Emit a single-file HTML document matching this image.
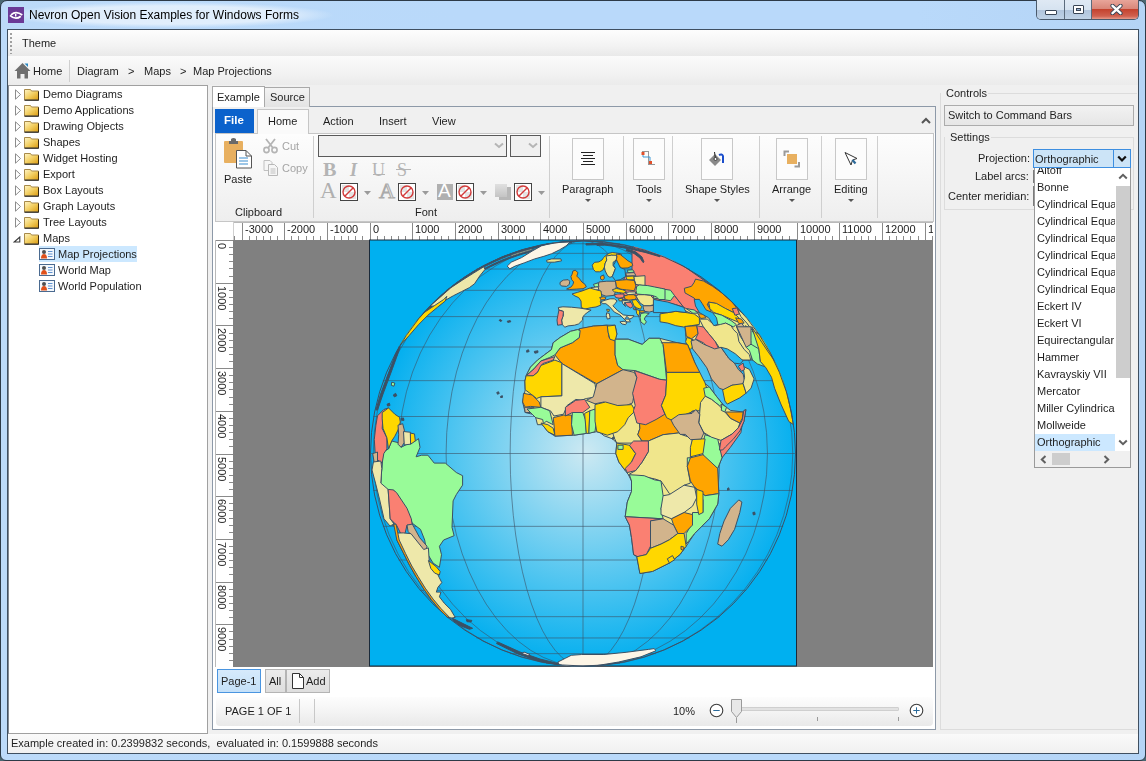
<!DOCTYPE html>
<html><head><meta charset="utf-8">
<style>
*{margin:0;padding:0;box-sizing:border-box}
html,body{width:1146px;height:761px;overflow:hidden;background:#4a6872}
body{position:relative;font-family:"Liberation Sans",sans-serif;font-size:11px;color:#1e1e1e}
.a{position:absolute}
.t{position:absolute;font-size:11px;line-height:13px;white-space:nowrap;color:#1e1e1e;will-change:transform}
#frame{left:0;top:0;width:1146px;height:761px;border:1px solid #2d3a47;border-radius:7px 7px 6px 6px;
 background:linear-gradient(90deg,#bcdaf9 0%,#b9d9fa 40%,#b9d9fa 80%,#b4d4f6 100%)}
#client{left:7px;top:29px;width:1132px;height:725px;border:1px solid #3f4f60;background:#f0f0f0}
</style></head>
<body>
<div id="frame" class="a"></div>
<!-- title glow -->
<div class="a" style="left:4px;top:2px;width:330px;height:26px;background:radial-gradient(closest-side,rgba(226,239,252,.95) 70%,rgba(226,239,252,0) 100%)"></div>
<!-- app icon -->
<div class="a" style="left:8px;top:7px;width:16px;height:16px;background:#6b3a96"></div>
<svg class="a" style="left:8px;top:7px" width="16" height="16" viewBox="0 0 16 16"><path d="M3 7.8 Q8 3.2 14.3 8" fill="none" stroke="#fff" stroke-width="1.6"/><path d="M2 8.3 Q7.5 13.5 12.8 9.2" fill="none" stroke="#fff" stroke-width="1.8"/><path d="M7.7 7 V9.6" stroke="#fff" stroke-width="1.4"/></svg>
<div class="t" style="left:29px;top:8px;font-size:12px;line-height:14px;color:#000">Nevron Open Vision Examples for Windows Forms</div>
<!-- caption buttons -->
<div class="a" style="left:1036px;top:0;width:103px;height:20px;border:1px solid #4a5a6c;border-top:none;border-radius:0 0 5px 5px;overflow:hidden">
  <div class="a" style="left:0;top:0;width:28px;height:19px;background:linear-gradient(#dfe9f4 0,#d6e3f0 50%,#b0c4dc 51%,#bfd2e6 100%);border-right:1px solid #5b6b7c"></div>
  <div class="a" style="left:28px;top:0;width:27px;height:19px;background:linear-gradient(#dfe9f4 0,#d6e3f0 50%,#b0c4dc 51%,#bfd2e6 100%);border-right:1px solid #5b6b7c"></div>
  <div class="a" style="left:55px;top:0;width:47px;height:19px;background:linear-gradient(#e8a59a 0,#d9877a 45%,#c4432f 50%,#d0614f 85%,#e79b8b 100%)"></div>
  <div class="a" style="left:8px;top:10px;width:12px;height:5px;border:1px solid #3a4656;background:#fff;border-radius:1px"></div>
  <div class="a" style="left:36px;top:5px;width:11px;height:9px;border:1px solid #3a4656;background:#fff;border-radius:1px"><div class="a" style="left:2px;top:2px;width:5px;height:3px;background:#9bb5d6;border:1px solid #3a4656"></div></div>
  <svg class="a" style="left:73px;top:4px" width="13" height="11" viewBox="0 0 13 11"><path d="M2.5 1.8 L10.5 9.2 M10.5 1.8 L2.5 9.2" stroke="#3a4656" stroke-width="4.2" stroke-linecap="round"/><path d="M2.5 1.8 L10.5 9.2 M10.5 1.8 L2.5 9.2" stroke="#fff" stroke-width="2.4" stroke-linecap="round"/></svg>
</div>

<div id="client" class="a"></div>
<!-- theme bar -->
<div class="a" style="left:8px;top:30px;width:1130px;height:26px;background:linear-gradient(#fdfdfd,#f3f3f3 60%,#e9e9e9)"></div>
<div class="a" style="left:10px;top:33px;width:2px;height:21px;background:repeating-linear-gradient(#a0a0a0 0 2px,transparent 2px 4px)"></div>
<div class="t" style="left:22px;top:37px">Theme</div>
<!-- breadcrumb -->
<div class="a" style="left:8px;top:56px;width:1130px;height:29px;background:linear-gradient(#fbfbfb,#f2f2f2 60%,#ebebeb)"></div>
<svg class="a" style="left:14px;top:62px" width="17" height="17" viewBox="0 0 17 17"><path d="M0.5 9 L8.5 1 L16.5 9 L14 9 L14 16.5 L10.5 16.5 L10.5 12 L6.5 12 L6.5 16.5 L3 16.5 L3 9Z" fill="#6f6f6f"/><path d="M10.5 1.5 L14 1.5 L14 5Z" fill="#2a87c0"/></svg>
<div class="t" style="left:33px;top:65px">Home</div>
<div class="a" style="left:69px;top:60px;width:1px;height:22px;background:#cfcfcf"></div>
<div class="t" style="left:77px;top:65px">Diagram</div>
<div class="t" style="left:128px;top:65px">&gt;</div>
<div class="t" style="left:144px;top:65px">Maps</div>
<div class="t" style="left:180px;top:65px">&gt;</div>
<div class="t" style="left:193px;top:65px">Map Projections</div>

<!-- tree panel -->
<div class="a" style="left:8px;top:85px;width:200px;height:649px;background:#fff;border:1px solid #a0a0a0;border-left-color:#828790"></div>
<svg class="a" style="left:14px;top:89px" width="8" height="11" viewBox="0 0 8 11"><path d="M1.5 0.8 L6.5 5.5 L1.5 10.2Z" fill="none" stroke="#8c8c8c" stroke-width="1"/></svg>
<svg class="a" style="left:24px;top:88px" width="16" height="13" viewBox="0 0 16 13"><defs><linearGradient id="fg0" x1="0" y1="0" x2="1" y2="1"><stop offset="0" stop-color="#fff6c8"/><stop offset=".5" stop-color="#f3cf62"/><stop offset="1" stop-color="#d99a10"/></linearGradient></defs><path d="M0.5 1.5 L6.5 1.5 L7.5 3 L14.5 3 L14.5 12 L0.5 12Z" fill="url(#fg0)" stroke="#a88a4a" stroke-width="1"/><path d="M0.5 12.2 L14.8 12.2" stroke="#2a2a2a" stroke-width="1.2"/><path d="M14.5 3.5 L14.5 12" stroke="#3a2a10" stroke-width="1"/></svg>
<div class="t" style="left:43px;top:88px">Demo Diagrams</div>
<svg class="a" style="left:14px;top:105px" width="8" height="11" viewBox="0 0 8 11"><path d="M1.5 0.8 L6.5 5.5 L1.5 10.2Z" fill="none" stroke="#8c8c8c" stroke-width="1"/></svg>
<svg class="a" style="left:24px;top:104px" width="16" height="13" viewBox="0 0 16 13"><defs><linearGradient id="fg1" x1="0" y1="0" x2="1" y2="1"><stop offset="0" stop-color="#fff6c8"/><stop offset=".5" stop-color="#f3cf62"/><stop offset="1" stop-color="#d99a10"/></linearGradient></defs><path d="M0.5 1.5 L6.5 1.5 L7.5 3 L14.5 3 L14.5 12 L0.5 12Z" fill="url(#fg1)" stroke="#a88a4a" stroke-width="1"/><path d="M0.5 12.2 L14.8 12.2" stroke="#2a2a2a" stroke-width="1.2"/><path d="M14.5 3.5 L14.5 12" stroke="#3a2a10" stroke-width="1"/></svg>
<div class="t" style="left:43px;top:104px">Demo Applications</div>
<svg class="a" style="left:14px;top:121px" width="8" height="11" viewBox="0 0 8 11"><path d="M1.5 0.8 L6.5 5.5 L1.5 10.2Z" fill="none" stroke="#8c8c8c" stroke-width="1"/></svg>
<svg class="a" style="left:24px;top:120px" width="16" height="13" viewBox="0 0 16 13"><defs><linearGradient id="fg2" x1="0" y1="0" x2="1" y2="1"><stop offset="0" stop-color="#fff6c8"/><stop offset=".5" stop-color="#f3cf62"/><stop offset="1" stop-color="#d99a10"/></linearGradient></defs><path d="M0.5 1.5 L6.5 1.5 L7.5 3 L14.5 3 L14.5 12 L0.5 12Z" fill="url(#fg2)" stroke="#a88a4a" stroke-width="1"/><path d="M0.5 12.2 L14.8 12.2" stroke="#2a2a2a" stroke-width="1.2"/><path d="M14.5 3.5 L14.5 12" stroke="#3a2a10" stroke-width="1"/></svg>
<div class="t" style="left:43px;top:120px">Drawing Objects</div>
<svg class="a" style="left:14px;top:137px" width="8" height="11" viewBox="0 0 8 11"><path d="M1.5 0.8 L6.5 5.5 L1.5 10.2Z" fill="none" stroke="#8c8c8c" stroke-width="1"/></svg>
<svg class="a" style="left:24px;top:136px" width="16" height="13" viewBox="0 0 16 13"><defs><linearGradient id="fg3" x1="0" y1="0" x2="1" y2="1"><stop offset="0" stop-color="#fff6c8"/><stop offset=".5" stop-color="#f3cf62"/><stop offset="1" stop-color="#d99a10"/></linearGradient></defs><path d="M0.5 1.5 L6.5 1.5 L7.5 3 L14.5 3 L14.5 12 L0.5 12Z" fill="url(#fg3)" stroke="#a88a4a" stroke-width="1"/><path d="M0.5 12.2 L14.8 12.2" stroke="#2a2a2a" stroke-width="1.2"/><path d="M14.5 3.5 L14.5 12" stroke="#3a2a10" stroke-width="1"/></svg>
<div class="t" style="left:43px;top:136px">Shapes</div>
<svg class="a" style="left:14px;top:153px" width="8" height="11" viewBox="0 0 8 11"><path d="M1.5 0.8 L6.5 5.5 L1.5 10.2Z" fill="none" stroke="#8c8c8c" stroke-width="1"/></svg>
<svg class="a" style="left:24px;top:152px" width="16" height="13" viewBox="0 0 16 13"><defs><linearGradient id="fg4" x1="0" y1="0" x2="1" y2="1"><stop offset="0" stop-color="#fff6c8"/><stop offset=".5" stop-color="#f3cf62"/><stop offset="1" stop-color="#d99a10"/></linearGradient></defs><path d="M0.5 1.5 L6.5 1.5 L7.5 3 L14.5 3 L14.5 12 L0.5 12Z" fill="url(#fg4)" stroke="#a88a4a" stroke-width="1"/><path d="M0.5 12.2 L14.8 12.2" stroke="#2a2a2a" stroke-width="1.2"/><path d="M14.5 3.5 L14.5 12" stroke="#3a2a10" stroke-width="1"/></svg>
<div class="t" style="left:43px;top:152px">Widget Hosting</div>
<svg class="a" style="left:14px;top:169px" width="8" height="11" viewBox="0 0 8 11"><path d="M1.5 0.8 L6.5 5.5 L1.5 10.2Z" fill="none" stroke="#8c8c8c" stroke-width="1"/></svg>
<svg class="a" style="left:24px;top:168px" width="16" height="13" viewBox="0 0 16 13"><defs><linearGradient id="fg5" x1="0" y1="0" x2="1" y2="1"><stop offset="0" stop-color="#fff6c8"/><stop offset=".5" stop-color="#f3cf62"/><stop offset="1" stop-color="#d99a10"/></linearGradient></defs><path d="M0.5 1.5 L6.5 1.5 L7.5 3 L14.5 3 L14.5 12 L0.5 12Z" fill="url(#fg5)" stroke="#a88a4a" stroke-width="1"/><path d="M0.5 12.2 L14.8 12.2" stroke="#2a2a2a" stroke-width="1.2"/><path d="M14.5 3.5 L14.5 12" stroke="#3a2a10" stroke-width="1"/></svg>
<div class="t" style="left:43px;top:168px">Export</div>
<svg class="a" style="left:14px;top:185px" width="8" height="11" viewBox="0 0 8 11"><path d="M1.5 0.8 L6.5 5.5 L1.5 10.2Z" fill="none" stroke="#8c8c8c" stroke-width="1"/></svg>
<svg class="a" style="left:24px;top:184px" width="16" height="13" viewBox="0 0 16 13"><defs><linearGradient id="fg6" x1="0" y1="0" x2="1" y2="1"><stop offset="0" stop-color="#fff6c8"/><stop offset=".5" stop-color="#f3cf62"/><stop offset="1" stop-color="#d99a10"/></linearGradient></defs><path d="M0.5 1.5 L6.5 1.5 L7.5 3 L14.5 3 L14.5 12 L0.5 12Z" fill="url(#fg6)" stroke="#a88a4a" stroke-width="1"/><path d="M0.5 12.2 L14.8 12.2" stroke="#2a2a2a" stroke-width="1.2"/><path d="M14.5 3.5 L14.5 12" stroke="#3a2a10" stroke-width="1"/></svg>
<div class="t" style="left:43px;top:184px">Box Layouts</div>
<svg class="a" style="left:14px;top:201px" width="8" height="11" viewBox="0 0 8 11"><path d="M1.5 0.8 L6.5 5.5 L1.5 10.2Z" fill="none" stroke="#8c8c8c" stroke-width="1"/></svg>
<svg class="a" style="left:24px;top:200px" width="16" height="13" viewBox="0 0 16 13"><defs><linearGradient id="fg7" x1="0" y1="0" x2="1" y2="1"><stop offset="0" stop-color="#fff6c8"/><stop offset=".5" stop-color="#f3cf62"/><stop offset="1" stop-color="#d99a10"/></linearGradient></defs><path d="M0.5 1.5 L6.5 1.5 L7.5 3 L14.5 3 L14.5 12 L0.5 12Z" fill="url(#fg7)" stroke="#a88a4a" stroke-width="1"/><path d="M0.5 12.2 L14.8 12.2" stroke="#2a2a2a" stroke-width="1.2"/><path d="M14.5 3.5 L14.5 12" stroke="#3a2a10" stroke-width="1"/></svg>
<div class="t" style="left:43px;top:200px">Graph Layouts</div>
<svg class="a" style="left:14px;top:217px" width="8" height="11" viewBox="0 0 8 11"><path d="M1.5 0.8 L6.5 5.5 L1.5 10.2Z" fill="none" stroke="#8c8c8c" stroke-width="1"/></svg>
<svg class="a" style="left:24px;top:216px" width="16" height="13" viewBox="0 0 16 13"><defs><linearGradient id="fg8" x1="0" y1="0" x2="1" y2="1"><stop offset="0" stop-color="#fff6c8"/><stop offset=".5" stop-color="#f3cf62"/><stop offset="1" stop-color="#d99a10"/></linearGradient></defs><path d="M0.5 1.5 L6.5 1.5 L7.5 3 L14.5 3 L14.5 12 L0.5 12Z" fill="url(#fg8)" stroke="#a88a4a" stroke-width="1"/><path d="M0.5 12.2 L14.8 12.2" stroke="#2a2a2a" stroke-width="1.2"/><path d="M14.5 3.5 L14.5 12" stroke="#3a2a10" stroke-width="1"/></svg>
<div class="t" style="left:43px;top:216px">Tree Layouts</div>
<svg class="a" style="left:13px;top:236px" width="8" height="7" viewBox="0 0 8 7"><path d="M6.8 1 L6.8 6 L1.2 6Z" fill="none" stroke="#3a3a3a" stroke-width="1.1" stroke-linejoin="miter"/></svg>
<svg class="a" style="left:24px;top:232px" width="16" height="13" viewBox="0 0 16 13"><defs><linearGradient id="fg9" x1="0" y1="0" x2="1" y2="1"><stop offset="0" stop-color="#fff6c8"/><stop offset=".5" stop-color="#f3cf62"/><stop offset="1" stop-color="#d99a10"/></linearGradient></defs><path d="M0.5 1.5 L6.5 1.5 L7.5 3 L14.5 3 L14.5 12 L0.5 12Z" fill="url(#fg9)" stroke="#a88a4a" stroke-width="1"/><path d="M0.5 12.2 L14.8 12.2" stroke="#2a2a2a" stroke-width="1.2"/><path d="M14.5 3.5 L14.5 12" stroke="#3a2a10" stroke-width="1"/></svg>
<div class="t" style="left:43px;top:232px">Maps</div>
<div class="a" style="left:39px;top:246px;width:98px;height:16px;background:#cce8ff"></div>
<svg class="a" style="left:39px;top:248px" width="16" height="12" viewBox="0 0 16 12"><rect x=".5" y=".5" width="15" height="11" fill="#f4f8fc" stroke="#4a6a90"/><circle cx="5" cy="4" r="2" fill="#505050"/><path d="M2 10.5 Q2 6 5 6 Q8 6 8 10.5Z" fill="#e0501a"/><path d="M9 3.5h4.5M9 6h4.5M9 8.5h4.5" stroke="#4f86cc" stroke-width=".9"/></svg>
<div class="t" style="left:58px;top:248px">Map Projections</div>
<svg class="a" style="left:39px;top:264px" width="16" height="12" viewBox="0 0 16 12"><rect x=".5" y=".5" width="15" height="11" fill="#f4f8fc" stroke="#4a6a90"/><circle cx="5" cy="4" r="2" fill="#505050"/><path d="M2 10.5 Q2 6 5 6 Q8 6 8 10.5Z" fill="#e0501a"/><path d="M9 3.5h4.5M9 6h4.5M9 8.5h4.5" stroke="#4f86cc" stroke-width=".9"/></svg>
<div class="t" style="left:58px;top:264px">World Map</div>
<svg class="a" style="left:39px;top:280px" width="16" height="12" viewBox="0 0 16 12"><rect x=".5" y=".5" width="15" height="11" fill="#f4f8fc" stroke="#4a6a90"/><circle cx="5" cy="4" r="2" fill="#505050"/><path d="M2 10.5 Q2 6 5 6 Q8 6 8 10.5Z" fill="#e0501a"/><path d="M9 3.5h4.5M9 6h4.5M9 8.5h4.5" stroke="#4f86cc" stroke-width=".9"/></svg>
<div class="t" style="left:58px;top:280px">World Population</div>

<!-- ===== center tab control ===== -->
<div class="a" style="left:212px;top:106px;width:724px;height:624px;background:#fff;border:1px solid #8d99a8"></div>
<div class="a" style="left:264px;top:87px;width:46px;height:20px;background:linear-gradient(#f3f3f3,#e3e3e3);border:1px solid #a9a9a9;border-bottom:none"></div>
<div class="a" style="left:212px;top:86px;width:53px;height:21px;background:#fff;border:1px solid #a9a9a9;border-bottom:none"></div>
<div class="t" style="left:217px;top:91px">Example</div>
<div class="t" style="left:270px;top:91px">Source</div>
<!-- ribbon tab strip -->
<div class="a" style="left:213px;top:107px;width:722px;height:26px;background:#f0f0f0"></div>
<div class="a" style="left:215px;top:109px;width:39px;height:24px;background:#0b62cc"></div>
<div class="t" style="left:224px;top:114px;color:#fff;font-weight:bold;font-size:11.5px;line-height:13px">File</div>
<div class="a" style="left:257px;top:109px;width:52px;height:25px;background:#fafafa;border:1px solid #c6c6c6;border-bottom:none;z-index:2"></div>
<div class="t" style="left:268px;top:115px;z-index:3">Home</div>
<div class="t" style="left:323px;top:115px">Action</div>
<div class="t" style="left:379px;top:115px">Insert</div>
<div class="t" style="left:432px;top:115px">View</div>
<svg class="a" style="left:921px;top:117px" width="10" height="8" viewBox="0 0 10 8"><path d="M1 6 L5 2 L9 6" fill="none" stroke="#555" stroke-width="2"/></svg>
<!-- ribbon body -->
<div class="a" style="left:215px;top:133px;width:719px;height:89px;background:linear-gradient(#fdfdfd,#f6f6f6 50%,#eeeeee);border:1px solid #c6c6c6"></div>
<div class="a" style="left:313px;top:136px;width:1px;height:82px;background:#cfcfcf"></div>
<div class="a" style="left:549px;top:136px;width:1px;height:82px;background:#cfcfcf"></div>
<div class="a" style="left:623px;top:136px;width:1px;height:82px;background:#cfcfcf"></div>
<div class="a" style="left:672px;top:136px;width:1px;height:82px;background:#cfcfcf"></div>
<div class="a" style="left:759px;top:136px;width:1px;height:82px;background:#cfcfcf"></div>
<div class="a" style="left:821px;top:136px;width:1px;height:82px;background:#cfcfcf"></div>
<div class="a" style="left:877px;top:136px;width:1px;height:82px;background:#cfcfcf"></div>
<!-- clipboard -->
<svg class="a" style="left:223px;top:137px" width="30" height="32" viewBox="0 0 30 32"><rect x="1" y="4" width="19" height="22" rx="1" fill="#e8b060"/><path d="M6 4 L8 4 L8 2 Q10.5 0 13 2 L13 4 L15 4 L15 7 L6 7Z" fill="#6a6a6a"/><path d="M13.5 13.5 L23 13.5 L28.5 19 L28.5 31 L13.5 31Z" fill="#fff" stroke="#555" stroke-width="1"/><path d="M23 13.5 L23 19 L28.5 19" fill="none" stroke="#555"/><path d="M16 21h9M16 24h9M16 27h9" stroke="#3a8ed0" stroke-width="1.2"/></svg>
<div class="t" style="left:224px;top:173px">Paste</div>
<div class="t" style="left:235px;top:206px">Clipboard</div>
<svg class="a" style="left:263px;top:138px" width="16" height="16" viewBox="0 0 16 16"><circle cx="3.5" cy="12" r="2.6" fill="none" stroke="#b4b4b4" stroke-width="1.6"/><circle cx="11.5" cy="12" r="2.6" fill="none" stroke="#b4b4b4" stroke-width="1.6"/><path d="M5 10 L12 1 M10 10 L3 1" stroke="#b4b4b4" stroke-width="1.8"/></svg>
<div class="t" style="left:282px;top:140px;color:#a5a5a5">Cut</div>
<svg class="a" style="left:263px;top:159px" width="16" height="17" viewBox="0 0 16 17"><path d="M1 1.5h6l2 2v8H1Z" fill="#f6f6f6" stroke="#c0c0c0"/><path d="M5.5 5.5h6l3 3v8h-9Z" fill="#f6f6f6" stroke="#b8b8b8"/><path d="M7.5 10h5M7.5 12h5M7.5 14h5" stroke="#c0c0c0"/></svg>
<div class="t" style="left:282px;top:162px;color:#a5a5a5">Copy</div>
<!-- font -->
<div class="a" style="left:318px;top:135px;width:189px;height:22px;border:1px solid #5a5a5a;background:#f0f0f0"></div>
<svg class="a" style="left:494px;top:142px" width="10" height="7" viewBox="0 0 10 7"><path d="M1 1.5 L5 5 L9 1.5" fill="none" stroke="#b5b5b5" stroke-width="2"/></svg>
<div class="a" style="left:510px;top:135px;width:31px;height:22px;border:1px solid #5a5a5a;background:#f0f0f0"></div>
<svg class="a" style="left:528px;top:142px" width="10" height="7" viewBox="0 0 10 7"><path d="M1 1.5 L5 5 L9 1.5" fill="none" stroke="#b5b5b5" stroke-width="2"/></svg>
<div class="a" style="left:323px;top:160px;font-family:'Liberation Serif';font-weight:bold;font-size:18px;transform:scaleX(1.12);transform-origin:0 0;line-height:20px;color:#b4b4b4">B</div>
<div class="a" style="left:350px;top:160px;font-family:'Liberation Serif';font-style:italic;font-weight:bold;font-size:18px;line-height:20px;color:#b4b4b4">I</div>
<div class="a" style="left:372px;top:160px;font-family:'Liberation Serif';font-size:18px;line-height:20px;color:#b4b4b4">U</div>
<div class="a" style="left:373px;top:174px;width:12px;height:1px;background:#b4b4b4"></div>
<div class="a" style="left:397px;top:160px;font-family:'Liberation Serif';font-size:18px;line-height:20px;color:#b4b4b4">S</div>
<div class="a" style="left:396px;top:169px;width:15px;height:1px;background:#b4b4b4"></div>
<div class="a" style="left:320px;top:179px;font-family:'Liberation Serif';font-size:23px;line-height:23px;color:#b0b0b0">A</div>
<svg class="a" style="left:340px;top:183px" width="18" height="18" viewBox="0 0 18 18"><rect x=".5" y=".5" width="17" height="17" fill="#fff" stroke="#444"/><rect x="2" y="2" width="7" height="7" fill="#e4e4e4"/><rect x="9" y="9" width="7" height="7" fill="#e4e4e4"/><circle cx="9" cy="9" r="6" fill="none" stroke="#d23a3a" stroke-width="1.4"/><path d="M13 5 L5 13" stroke="#d23a3a" stroke-width="1.4"/></svg>
<svg class="a" style="left:364px;top:191px" width="7" height="4" viewBox="0 0 7 4"><path d="M0 0 H7 L3.5 4Z" fill="#9a9a9a"/></svg>
<div class="a" style="left:379px;top:180px;font-family:'Liberation Serif';font-size:22px;line-height:22px;color:#e6e6e6;-webkit-text-stroke:1px #aaa">A</div>
<svg class="a" style="left:398px;top:183px" width="18" height="18" viewBox="0 0 18 18"><rect x=".5" y=".5" width="17" height="17" fill="#fff" stroke="#444"/><rect x="2" y="2" width="7" height="7" fill="#e4e4e4"/><rect x="9" y="9" width="7" height="7" fill="#e4e4e4"/><circle cx="9" cy="9" r="6" fill="none" stroke="#d23a3a" stroke-width="1.4"/><path d="M13 5 L5 13" stroke="#d23a3a" stroke-width="1.4"/></svg>
<svg class="a" style="left:422px;top:191px" width="7" height="4" viewBox="0 0 7 4"><path d="M0 0 H7 L3.5 4Z" fill="#9a9a9a"/></svg>
<div class="a" style="left:437px;top:184px;width:16px;height:16px;background:#b0b0b0"></div><div class="a" style="left:438px;top:181px;font-family:'Liberation Sans';font-size:19px;line-height:20px;color:#fff">A</div>
<svg class="a" style="left:456px;top:183px" width="18" height="18" viewBox="0 0 18 18"><rect x=".5" y=".5" width="17" height="17" fill="#fff" stroke="#444"/><rect x="2" y="2" width="7" height="7" fill="#e4e4e4"/><rect x="9" y="9" width="7" height="7" fill="#e4e4e4"/><circle cx="9" cy="9" r="6" fill="none" stroke="#d23a3a" stroke-width="1.4"/><path d="M13 5 L5 13" stroke="#d23a3a" stroke-width="1.4"/></svg>
<svg class="a" style="left:480px;top:191px" width="7" height="4" viewBox="0 0 7 4"><path d="M0 0 H7 L3.5 4Z" fill="#9a9a9a"/></svg>
<div class="a" style="left:499px;top:187px;width:12px;height:13px;background:#b8b8b8"></div><div class="a" style="left:495px;top:184px;width:12px;height:13px;background:linear-gradient(#e0e0e0,#c4c4c4)"></div>
<svg class="a" style="left:514px;top:183px" width="18" height="18" viewBox="0 0 18 18"><rect x=".5" y=".5" width="17" height="17" fill="#fff" stroke="#444"/><rect x="2" y="2" width="7" height="7" fill="#e4e4e4"/><rect x="9" y="9" width="7" height="7" fill="#e4e4e4"/><circle cx="9" cy="9" r="6" fill="none" stroke="#d23a3a" stroke-width="1.4"/><path d="M13 5 L5 13" stroke="#d23a3a" stroke-width="1.4"/></svg>
<svg class="a" style="left:538px;top:191px" width="7" height="4" viewBox="0 0 7 4"><path d="M0 0 H7 L3.5 4Z" fill="#9a9a9a"/></svg>
<div class="t" style="left:415px;top:206px">Font</div>
<!-- big buttons -->
<div class="a" style="left:572px;top:138px;width:32px;height:42px;border:1px solid #c8c8c8;background:#fcfcfc"></div>
<svg class="a" style="left:580px;top:151px" width="16" height="15" viewBox="0 0 16 15"><path d="M1 1.5h14M3 4.5h10M1 7.5h14M3 10.5h10M1 13.5h14" stroke="#222" stroke-width="1"/></svg>
<div class="t" style="left:562px;top:183px">Paragraph</div>
<div class="a" style="left:633px;top:138px;width:32px;height:42px;border:1px solid #c8c8c8;background:#fcfcfc"></div>
<svg class="a" style="left:640px;top:150px" width="18" height="18" viewBox="0 0 18 18"><path d="M2.5 1.5h6v13h6" fill="none" stroke="#333" stroke-width="1" stroke-dasharray="1 1"/><path d="M3 4 V7 H10 V12" fill="none" stroke="#3f9ad6" stroke-width="1"/><rect x="1.5" y="2" width="3" height="3" fill="#e2502a"/><rect x="9" y="11" width="3" height="3" fill="#e2502a"/></svg>
<div class="t" style="left:636px;top:183px">Tools</div>
<div class="a" style="left:701px;top:138px;width:32px;height:42px;border:1px solid #c8c8c8;background:#fcfcfc"></div>
<svg class="a" style="left:708px;top:150px" width="18" height="18" viewBox="0 0 18 18"><path d="M1 10 L7 4 L13 10 L7 16Z" fill="#8a8a8a"/><path d="M6.5 2 L7.5 9" stroke="#222" stroke-width="1"/><circle cx="7.5" cy="9" r="1.5" fill="#fff" stroke="#222" stroke-width=".8"/><path d="M11 5 Q14 3.5 15 6 L15 13" fill="none" stroke="#1c4fcc" stroke-width="2"/></svg>
<div class="t" style="left:685px;top:183px">Shape Styles</div>
<div class="a" style="left:776px;top:138px;width:32px;height:42px;border:1px solid #c8c8c8;background:#fcfcfc"></div>
<svg class="a" style="left:783px;top:150px" width="18" height="18" viewBox="0 0 18 18"><path d="M1.5 6V1.5H6" fill="none" stroke="#9a9a9a" stroke-width="2"/><path d="M16 12v4.5h-4.5" fill="none" stroke="#9a9a9a" stroke-width="2"/><rect x="4" y="4" width="10" height="10" fill="#e8b060"/></svg>
<div class="t" style="left:772px;top:183px">Arrange</div>
<div class="a" style="left:835px;top:138px;width:32px;height:42px;border:1px solid #c8c8c8;background:#fcfcfc"></div>
<svg class="a" style="left:843px;top:151px" width="16" height="16" viewBox="0 0 16 16"><path d="M2 1.5 L14 7.5 L9.5 9 L8 14Z" fill="#fff" stroke="#333" stroke-width="1" stroke-linejoin="round"/><path d="M9.5 9 L12.5 12.5" stroke="#2d6a9a" stroke-width="2.2"/></svg>
<div class="t" style="left:834px;top:183px">Editing</div>
<svg class="a" style="left:585px;top:199px" width="6" height="3" viewBox="0 0 6 3"><path d="M0 0 H6 L3 3Z" fill="#555"/></svg>
<svg class="a" style="left:646px;top:199px" width="6" height="3" viewBox="0 0 6 3"><path d="M0 0 H6 L3 3Z" fill="#555"/></svg>
<svg class="a" style="left:714px;top:199px" width="6" height="3" viewBox="0 0 6 3"><path d="M0 0 H6 L3 3Z" fill="#555"/></svg>
<svg class="a" style="left:789px;top:199px" width="6" height="3" viewBox="0 0 6 3"><path d="M0 0 H6 L3 3Z" fill="#555"/></svg>
<svg class="a" style="left:848px;top:199px" width="6" height="3" viewBox="0 0 6 3"><path d="M0 0 H6 L3 3Z" fill="#555"/></svg>
<div class="a" style="left:215px;top:222px;width:719px;height:19px;background:#fff"></div><div class="a" style="left:0;top:0;width:933px;height:761px;overflow:hidden">
<div class="a" style="left:233px;top:222px;width:700px;height:1px;background:#b9b9b9"></div>
<div class="a" style="left:233px;top:222px;width:1px;height:18px;background:#d0d0d0"></div>
<div class="a" style="left:215px;top:240px;width:18px;height:427px;background:#fff;border-top:1px solid #b9b9b9;border-left:1px solid #b9b9b9"></div>
<div class="t" style="left:245px;top:223px;color:#222">-3000</div>
<div class="t" style="left:287px;top:223px;color:#222">-2000</div>
<div class="t" style="left:330px;top:223px;color:#222">-1000</div>
<div class="t" style="left:373px;top:223px;color:#222">0</div>
<div class="t" style="left:415px;top:223px;color:#222">1000</div>
<div class="t" style="left:458px;top:223px;color:#222">2000</div>
<div class="t" style="left:501px;top:223px;color:#222">3000</div>
<div class="t" style="left:543px;top:223px;color:#222">4000</div>
<div class="t" style="left:586px;top:223px;color:#222">5000</div>
<div class="t" style="left:629px;top:223px;color:#222">6000</div>
<div class="t" style="left:671px;top:223px;color:#222">7000</div>
<div class="t" style="left:714px;top:223px;color:#222">8000</div>
<div class="t" style="left:757px;top:223px;color:#222">9000</div>
<div class="t" style="left:800px;top:223px;color:#222">10000</div>
<div class="t" style="left:842px;top:223px;color:#222">11000</div>
<div class="t" style="left:885px;top:223px;color:#222">12000</div>
<div class="t" style="left:928px;top:223px;color:#222">13000</div>
<div class="a" style="left:234px;top:236px;width:1px;height:4px;background:#8a8a8a"></div>
<div class="a" style="left:242px;top:223px;width:1px;height:17px;background:#8a8a8a"></div>
<div class="a" style="left:249px;top:236px;width:1px;height:4px;background:#8a8a8a"></div>
<div class="a" style="left:256px;top:236px;width:1px;height:4px;background:#8a8a8a"></div>
<div class="a" style="left:263px;top:236px;width:1px;height:4px;background:#8a8a8a"></div>
<div class="a" style="left:270px;top:236px;width:1px;height:4px;background:#8a8a8a"></div>
<div class="a" style="left:277px;top:236px;width:1px;height:4px;background:#8a8a8a"></div>
<div class="a" style="left:284px;top:223px;width:1px;height:17px;background:#8a8a8a"></div>
<div class="a" style="left:291px;top:236px;width:1px;height:4px;background:#8a8a8a"></div>
<div class="a" style="left:298px;top:236px;width:1px;height:4px;background:#8a8a8a"></div>
<div class="a" style="left:306px;top:236px;width:1px;height:4px;background:#8a8a8a"></div>
<div class="a" style="left:313px;top:236px;width:1px;height:4px;background:#8a8a8a"></div>
<div class="a" style="left:320px;top:236px;width:1px;height:4px;background:#8a8a8a"></div>
<div class="a" style="left:327px;top:223px;width:1px;height:17px;background:#8a8a8a"></div>
<div class="a" style="left:334px;top:236px;width:1px;height:4px;background:#8a8a8a"></div>
<div class="a" style="left:341px;top:236px;width:1px;height:4px;background:#8a8a8a"></div>
<div class="a" style="left:348px;top:236px;width:1px;height:4px;background:#8a8a8a"></div>
<div class="a" style="left:355px;top:236px;width:1px;height:4px;background:#8a8a8a"></div>
<div class="a" style="left:362px;top:236px;width:1px;height:4px;background:#8a8a8a"></div>
<div class="a" style="left:370px;top:223px;width:1px;height:17px;background:#8a8a8a"></div>
<div class="a" style="left:377px;top:236px;width:1px;height:4px;background:#8a8a8a"></div>
<div class="a" style="left:384px;top:236px;width:1px;height:4px;background:#8a8a8a"></div>
<div class="a" style="left:391px;top:236px;width:1px;height:4px;background:#8a8a8a"></div>
<div class="a" style="left:398px;top:236px;width:1px;height:4px;background:#8a8a8a"></div>
<div class="a" style="left:405px;top:236px;width:1px;height:4px;background:#8a8a8a"></div>
<div class="a" style="left:412px;top:223px;width:1px;height:17px;background:#8a8a8a"></div>
<div class="a" style="left:419px;top:236px;width:1px;height:4px;background:#8a8a8a"></div>
<div class="a" style="left:427px;top:236px;width:1px;height:4px;background:#8a8a8a"></div>
<div class="a" style="left:434px;top:236px;width:1px;height:4px;background:#8a8a8a"></div>
<div class="a" style="left:441px;top:236px;width:1px;height:4px;background:#8a8a8a"></div>
<div class="a" style="left:448px;top:236px;width:1px;height:4px;background:#8a8a8a"></div>
<div class="a" style="left:455px;top:223px;width:1px;height:17px;background:#8a8a8a"></div>
<div class="a" style="left:462px;top:236px;width:1px;height:4px;background:#8a8a8a"></div>
<div class="a" style="left:469px;top:236px;width:1px;height:4px;background:#8a8a8a"></div>
<div class="a" style="left:476px;top:236px;width:1px;height:4px;background:#8a8a8a"></div>
<div class="a" style="left:483px;top:236px;width:1px;height:4px;background:#8a8a8a"></div>
<div class="a" style="left:491px;top:236px;width:1px;height:4px;background:#8a8a8a"></div>
<div class="a" style="left:498px;top:223px;width:1px;height:17px;background:#8a8a8a"></div>
<div class="a" style="left:505px;top:236px;width:1px;height:4px;background:#8a8a8a"></div>
<div class="a" style="left:512px;top:236px;width:1px;height:4px;background:#8a8a8a"></div>
<div class="a" style="left:519px;top:236px;width:1px;height:4px;background:#8a8a8a"></div>
<div class="a" style="left:526px;top:236px;width:1px;height:4px;background:#8a8a8a"></div>
<div class="a" style="left:533px;top:236px;width:1px;height:4px;background:#8a8a8a"></div>
<div class="a" style="left:540px;top:223px;width:1px;height:17px;background:#8a8a8a"></div>
<div class="a" style="left:548px;top:236px;width:1px;height:4px;background:#8a8a8a"></div>
<div class="a" style="left:555px;top:236px;width:1px;height:4px;background:#8a8a8a"></div>
<div class="a" style="left:562px;top:236px;width:1px;height:4px;background:#8a8a8a"></div>
<div class="a" style="left:569px;top:236px;width:1px;height:4px;background:#8a8a8a"></div>
<div class="a" style="left:576px;top:236px;width:1px;height:4px;background:#8a8a8a"></div>
<div class="a" style="left:583px;top:223px;width:1px;height:17px;background:#8a8a8a"></div>
<div class="a" style="left:590px;top:236px;width:1px;height:4px;background:#8a8a8a"></div>
<div class="a" style="left:597px;top:236px;width:1px;height:4px;background:#8a8a8a"></div>
<div class="a" style="left:604px;top:236px;width:1px;height:4px;background:#8a8a8a"></div>
<div class="a" style="left:612px;top:236px;width:1px;height:4px;background:#8a8a8a"></div>
<div class="a" style="left:619px;top:236px;width:1px;height:4px;background:#8a8a8a"></div>
<div class="a" style="left:626px;top:223px;width:1px;height:17px;background:#8a8a8a"></div>
<div class="a" style="left:633px;top:236px;width:1px;height:4px;background:#8a8a8a"></div>
<div class="a" style="left:640px;top:236px;width:1px;height:4px;background:#8a8a8a"></div>
<div class="a" style="left:647px;top:236px;width:1px;height:4px;background:#8a8a8a"></div>
<div class="a" style="left:654px;top:236px;width:1px;height:4px;background:#8a8a8a"></div>
<div class="a" style="left:661px;top:236px;width:1px;height:4px;background:#8a8a8a"></div>
<div class="a" style="left:668px;top:223px;width:1px;height:17px;background:#8a8a8a"></div>
<div class="a" style="left:676px;top:236px;width:1px;height:4px;background:#8a8a8a"></div>
<div class="a" style="left:683px;top:236px;width:1px;height:4px;background:#8a8a8a"></div>
<div class="a" style="left:690px;top:236px;width:1px;height:4px;background:#8a8a8a"></div>
<div class="a" style="left:697px;top:236px;width:1px;height:4px;background:#8a8a8a"></div>
<div class="a" style="left:704px;top:236px;width:1px;height:4px;background:#8a8a8a"></div>
<div class="a" style="left:711px;top:223px;width:1px;height:17px;background:#8a8a8a"></div>
<div class="a" style="left:718px;top:236px;width:1px;height:4px;background:#8a8a8a"></div>
<div class="a" style="left:725px;top:236px;width:1px;height:4px;background:#8a8a8a"></div>
<div class="a" style="left:733px;top:236px;width:1px;height:4px;background:#8a8a8a"></div>
<div class="a" style="left:740px;top:236px;width:1px;height:4px;background:#8a8a8a"></div>
<div class="a" style="left:747px;top:236px;width:1px;height:4px;background:#8a8a8a"></div>
<div class="a" style="left:754px;top:223px;width:1px;height:17px;background:#8a8a8a"></div>
<div class="a" style="left:761px;top:236px;width:1px;height:4px;background:#8a8a8a"></div>
<div class="a" style="left:768px;top:236px;width:1px;height:4px;background:#8a8a8a"></div>
<div class="a" style="left:775px;top:236px;width:1px;height:4px;background:#8a8a8a"></div>
<div class="a" style="left:782px;top:236px;width:1px;height:4px;background:#8a8a8a"></div>
<div class="a" style="left:789px;top:236px;width:1px;height:4px;background:#8a8a8a"></div>
<div class="a" style="left:797px;top:223px;width:1px;height:17px;background:#8a8a8a"></div>
<div class="a" style="left:804px;top:236px;width:1px;height:4px;background:#8a8a8a"></div>
<div class="a" style="left:811px;top:236px;width:1px;height:4px;background:#8a8a8a"></div>
<div class="a" style="left:818px;top:236px;width:1px;height:4px;background:#8a8a8a"></div>
<div class="a" style="left:825px;top:236px;width:1px;height:4px;background:#8a8a8a"></div>
<div class="a" style="left:832px;top:236px;width:1px;height:4px;background:#8a8a8a"></div>
<div class="a" style="left:839px;top:223px;width:1px;height:17px;background:#8a8a8a"></div>
<div class="a" style="left:846px;top:236px;width:1px;height:4px;background:#8a8a8a"></div>
<div class="a" style="left:854px;top:236px;width:1px;height:4px;background:#8a8a8a"></div>
<div class="a" style="left:861px;top:236px;width:1px;height:4px;background:#8a8a8a"></div>
<div class="a" style="left:868px;top:236px;width:1px;height:4px;background:#8a8a8a"></div>
<div class="a" style="left:875px;top:236px;width:1px;height:4px;background:#8a8a8a"></div>
<div class="a" style="left:882px;top:223px;width:1px;height:17px;background:#8a8a8a"></div>
<div class="a" style="left:889px;top:236px;width:1px;height:4px;background:#8a8a8a"></div>
<div class="a" style="left:896px;top:236px;width:1px;height:4px;background:#8a8a8a"></div>
<div class="a" style="left:903px;top:236px;width:1px;height:4px;background:#8a8a8a"></div>
<div class="a" style="left:910px;top:236px;width:1px;height:4px;background:#8a8a8a"></div>
<div class="a" style="left:918px;top:236px;width:1px;height:4px;background:#8a8a8a"></div>
<div class="a" style="left:925px;top:223px;width:1px;height:17px;background:#8a8a8a"></div>
<div class="a" style="left:932px;top:236px;width:1px;height:4px;background:#8a8a8a"></div>
</div>
<div class="a" style="left:216px;top:240px;width:17px;height:1px;background:#8a8a8a"></div>
<div class="t" style="left:228px;top:243px;color:#222;transform-origin:0 0;transform:rotate(90deg)">0</div>
<div class="a" style="left:229px;top:247px;width:4px;height:1px;background:#8a8a8a"></div>
<div class="a" style="left:229px;top:254px;width:4px;height:1px;background:#8a8a8a"></div>
<div class="a" style="left:229px;top:261px;width:4px;height:1px;background:#8a8a8a"></div>
<div class="a" style="left:229px;top:268px;width:4px;height:1px;background:#8a8a8a"></div>
<div class="a" style="left:229px;top:276px;width:4px;height:1px;background:#8a8a8a"></div>
<div class="a" style="left:216px;top:283px;width:17px;height:1px;background:#8a8a8a"></div>
<div class="t" style="left:228px;top:286px;color:#222;transform-origin:0 0;transform:rotate(90deg)">1000</div>
<div class="a" style="left:229px;top:290px;width:4px;height:1px;background:#8a8a8a"></div>
<div class="a" style="left:229px;top:297px;width:4px;height:1px;background:#8a8a8a"></div>
<div class="a" style="left:229px;top:304px;width:4px;height:1px;background:#8a8a8a"></div>
<div class="a" style="left:229px;top:311px;width:4px;height:1px;background:#8a8a8a"></div>
<div class="a" style="left:229px;top:318px;width:4px;height:1px;background:#8a8a8a"></div>
<div class="a" style="left:216px;top:325px;width:17px;height:1px;background:#8a8a8a"></div>
<div class="t" style="left:228px;top:328px;color:#222;transform-origin:0 0;transform:rotate(90deg)">2000</div>
<div class="a" style="left:229px;top:333px;width:4px;height:1px;background:#8a8a8a"></div>
<div class="a" style="left:229px;top:340px;width:4px;height:1px;background:#8a8a8a"></div>
<div class="a" style="left:229px;top:347px;width:4px;height:1px;background:#8a8a8a"></div>
<div class="a" style="left:229px;top:354px;width:4px;height:1px;background:#8a8a8a"></div>
<div class="a" style="left:229px;top:361px;width:4px;height:1px;background:#8a8a8a"></div>
<div class="a" style="left:216px;top:368px;width:17px;height:1px;background:#8a8a8a"></div>
<div class="t" style="left:228px;top:371px;color:#222;transform-origin:0 0;transform:rotate(90deg)">3000</div>
<div class="a" style="left:229px;top:375px;width:4px;height:1px;background:#8a8a8a"></div>
<div class="a" style="left:229px;top:382px;width:4px;height:1px;background:#8a8a8a"></div>
<div class="a" style="left:229px;top:389px;width:4px;height:1px;background:#8a8a8a"></div>
<div class="a" style="left:229px;top:397px;width:4px;height:1px;background:#8a8a8a"></div>
<div class="a" style="left:229px;top:404px;width:4px;height:1px;background:#8a8a8a"></div>
<div class="a" style="left:216px;top:411px;width:17px;height:1px;background:#8a8a8a"></div>
<div class="t" style="left:228px;top:414px;color:#222;transform-origin:0 0;transform:rotate(90deg)">4000</div>
<div class="a" style="left:229px;top:418px;width:4px;height:1px;background:#8a8a8a"></div>
<div class="a" style="left:229px;top:425px;width:4px;height:1px;background:#8a8a8a"></div>
<div class="a" style="left:229px;top:432px;width:4px;height:1px;background:#8a8a8a"></div>
<div class="a" style="left:229px;top:439px;width:4px;height:1px;background:#8a8a8a"></div>
<div class="a" style="left:229px;top:446px;width:4px;height:1px;background:#8a8a8a"></div>
<div class="a" style="left:216px;top:454px;width:17px;height:1px;background:#8a8a8a"></div>
<div class="t" style="left:228px;top:457px;color:#222;transform-origin:0 0;transform:rotate(90deg)">5000</div>
<div class="a" style="left:229px;top:461px;width:4px;height:1px;background:#8a8a8a"></div>
<div class="a" style="left:229px;top:468px;width:4px;height:1px;background:#8a8a8a"></div>
<div class="a" style="left:229px;top:475px;width:4px;height:1px;background:#8a8a8a"></div>
<div class="a" style="left:229px;top:482px;width:4px;height:1px;background:#8a8a8a"></div>
<div class="a" style="left:229px;top:489px;width:4px;height:1px;background:#8a8a8a"></div>
<div class="a" style="left:216px;top:496px;width:17px;height:1px;background:#8a8a8a"></div>
<div class="t" style="left:228px;top:499px;color:#222;transform-origin:0 0;transform:rotate(90deg)">6000</div>
<div class="a" style="left:229px;top:503px;width:4px;height:1px;background:#8a8a8a"></div>
<div class="a" style="left:229px;top:510px;width:4px;height:1px;background:#8a8a8a"></div>
<div class="a" style="left:229px;top:518px;width:4px;height:1px;background:#8a8a8a"></div>
<div class="a" style="left:229px;top:525px;width:4px;height:1px;background:#8a8a8a"></div>
<div class="a" style="left:229px;top:532px;width:4px;height:1px;background:#8a8a8a"></div>
<div class="a" style="left:216px;top:539px;width:17px;height:1px;background:#8a8a8a"></div>
<div class="t" style="left:228px;top:542px;color:#222;transform-origin:0 0;transform:rotate(90deg)">7000</div>
<div class="a" style="left:229px;top:546px;width:4px;height:1px;background:#8a8a8a"></div>
<div class="a" style="left:229px;top:553px;width:4px;height:1px;background:#8a8a8a"></div>
<div class="a" style="left:229px;top:560px;width:4px;height:1px;background:#8a8a8a"></div>
<div class="a" style="left:229px;top:567px;width:4px;height:1px;background:#8a8a8a"></div>
<div class="a" style="left:229px;top:574px;width:4px;height:1px;background:#8a8a8a"></div>
<div class="a" style="left:216px;top:582px;width:17px;height:1px;background:#8a8a8a"></div>
<div class="t" style="left:228px;top:585px;color:#222;transform-origin:0 0;transform:rotate(90deg)">8000</div>
<div class="a" style="left:229px;top:589px;width:4px;height:1px;background:#8a8a8a"></div>
<div class="a" style="left:229px;top:596px;width:4px;height:1px;background:#8a8a8a"></div>
<div class="a" style="left:229px;top:603px;width:4px;height:1px;background:#8a8a8a"></div>
<div class="a" style="left:229px;top:610px;width:4px;height:1px;background:#8a8a8a"></div>
<div class="a" style="left:229px;top:617px;width:4px;height:1px;background:#8a8a8a"></div>
<div class="a" style="left:216px;top:624px;width:17px;height:1px;background:#8a8a8a"></div>
<div class="t" style="left:228px;top:627px;color:#222;transform-origin:0 0;transform:rotate(90deg)">9000</div>
<div class="a" style="left:229px;top:631px;width:4px;height:1px;background:#8a8a8a"></div>
<div class="a" style="left:229px;top:639px;width:4px;height:1px;background:#8a8a8a"></div>
<div class="a" style="left:229px;top:646px;width:4px;height:1px;background:#8a8a8a"></div>
<div class="a" style="left:229px;top:653px;width:4px;height:1px;background:#8a8a8a"></div>
<div class="a" style="left:229px;top:660px;width:4px;height:1px;background:#8a8a8a"></div>
<div class="a" style="left:233px;top:240px;width:700px;height:427px;background:#808080"></div>
<svg class="a" style="left:0;top:0" width="1146" height="761" viewBox="0 0 1146 761"><defs><radialGradient id="oc" gradientUnits="userSpaceOnUse" cx="586" cy="452" r="216" fx="586" fy="452"><stop offset="0" stop-color="#cde9f2"/><stop offset="1" stop-color="#00aeef"/></radialGradient><clipPath id="gc"><circle cx="583" cy="453.5" r="213"/></clipPath></defs><rect x="369.5" y="240" width="427" height="426" fill="#00b0f0" stroke="#1a2a3a" stroke-width="1"/><circle cx="583" cy="453.5" r="213" fill="url(#oc)"/><path d="M546.01 663.26H619.99 M510.15 653.65H655.85 M476.50 637.96H689.50 M446.09 616.67H719.91 M419.83 590.41H746.17 M398.54 560.00H767.46 M382.85 526.35H783.15 M373.24 490.49H792.76 M370.00 453.50H796.00 M373.24 416.51H792.76 M382.85 380.65H783.15 M398.54 347.00H767.46 M419.83 316.59H746.17 M446.09 290.33H719.91 M476.50 269.04H689.50 M510.15 253.35H655.85 M546.01 243.74H619.99 M583.00 240.50A209.76 213.00 0 0 0 583.00 666.50 M583.00 240.50A184.46 213.00 0 0 0 583.00 666.50 M583.00 240.50A136.91 213.00 0 0 0 583.00 666.50 M583.00 240.50A72.85 213.00 0 0 0 583.00 666.50 M583.00 240.50V666.50 M583.00 240.50A72.85 213.00 0 0 1 583.00 666.50 M583.00 240.50A136.91 213.00 0 0 1 583.00 666.50 M583.00 240.50A184.46 213.00 0 0 1 583.00 666.50 M583.00 240.50A209.76 213.00 0 0 1 583.00 666.50" fill="none" stroke="#3c5064" stroke-width=".8" opacity=".75"/><g clip-path="url(#gc)" stroke="#3c5064" stroke-width="1" stroke-linejoin="round"><polygon points="683.7,286.3 738.9,308.6 752.0,331.0 754.6,360.0 738.9,360.0 731.0,354.6 719.1,349.4 711.3,350.7 691.5,338.9 686.3,341.5 685.0,326.4 696.8,325.7 699.4,317.8 683.7,309.9" fill="#f0e68c"/><polygon points="620.6,286.3 674.5,295.5 683.7,307.3 675.8,304.7 653.4,299.4 620.6,299.4" fill="#fa8072"/><polygon points="632.0,248.0 645.0,233.7 673.1,220.6 673.1,260.0 686.3,267.9 699.4,277.1 712.6,286.3 723.1,294.2 733.6,303.4 738.9,308.6 736.2,312.6 707.3,304.7 699.4,312.6 686.3,308.6 683.7,307.3 674.5,295.5 620.0,295.5 625.0,275.0 632.0,270.0" fill="#fa8072"/><polygon points="695.5,279.1 703.4,281.0 712.6,286.3 721.8,292.9 731.0,300.7 736.2,307.3 733.6,312.6 728.3,309.9 721.8,307.3 715.2,303.4 708.6,302.1 707.3,304.7 711.3,311.3 706.0,312.6 703.4,307.3 698.1,303.4 694.2,298.1 685.0,292.9 684.3,288.3 691.5,286.3 694.2,282.3" fill="#ffa500"/><polygon points="708.6,302.1 716.5,303.4 725.7,308.6 733.6,312.6 738.9,317.8 737.5,321.8 731.0,319.1 721.8,315.2 713.9,312.6 709.9,308.6" fill="#ffd700"/><polygon points="712.6,312.6 721.8,315.2 731.0,320.5 736.2,324.4 733.6,327.0 725.7,323.1 719.1,325.7 715.2,320.5" fill="#98fb98"/><polygon points="732.3,308.6 737.5,308.0 739.5,313.9 734.9,315.2" fill="#fa8072"/><polygon points="735.6,317.8 741.5,319.1 744.1,323.1 738.9,323.7" fill="#ffa500"/><polygon points="737.5,309.3 745.4,315.2 752.0,323.1 758.6,332.3 765.2,341.5 771.1,352.0 769.8,356.0 762.5,344.1 754.6,333.6 746.8,323.1 740.8,316.5" fill="#f0e68c"/><polygon points="699.4,319.1 707.3,319.1 715.2,325.7 720.5,324.4 725.7,323.1 731.0,325.7 733.6,329.7 737.5,333.6 738.9,341.5 744.1,349.4 749.4,354.6 750.7,360.0 738.9,360.0 731.0,354.6 720.5,349.4 715.2,341.5 708.6,333.6 703.4,327.0" fill="#f0e68c"/><polygon points="736.2,325.7 741.5,323.1 745.4,328.3 750.7,338.9 750.7,346.8 745.4,344.1 740.2,336.2" fill="#d2b48c"/><polygon points="745.4,325.7 752.0,329.7 758.6,338.9 761.2,349.4 762.5,360.0 752.0,360.0 750.7,352.0 750.7,341.5" fill="#98fb98"/><polygon points="752.0,331.0 758.6,333.6 765.2,341.5 771.7,354.6 774.4,360.0 763.8,360.0 761.2,349.4 758.6,338.9" fill="#ffd700"/><polygon points="660.0,313.9 667.9,312.6 675.8,311.3 686.3,312.6 694.2,313.9 699.4,317.8 699.4,324.4 691.5,325.7 683.7,327.0 675.8,325.7 667.9,323.1 660.0,321.8" fill="#ffd700"/><polygon points="686.3,308.6 694.2,309.9 698.1,313.2 692.9,313.2" fill="#98fb98"/><polygon points="698.1,313.9 703.4,313.9 706.0,317.8 700.7,318.5" fill="#ffa500"/><polygon points="685.0,326.4 696.8,325.7 698.1,333.6 691.5,338.9 686.3,336.2" fill="#ffa500"/><polygon points="696.8,325.7 703.4,327.0 708.6,333.6 715.2,341.5 719.1,349.4 711.3,350.7 703.4,342.8 695.5,338.9 698.1,333.6" fill="#fa8072"/><polygon points="686.9,337.5 691.5,338.9 692.9,346.8 688.9,350.7 685.6,341.5" fill="#ffd700"/><polygon points="653.4,287.6 670.5,290.2 674.5,295.5 670.5,300.7 653.4,298.1" fill="#98fb98"/><polygon points="633.6,276.5 645.0,275.7 645.0,286.0 635.9,284.4 634.3,279.7" fill="#f0e68c"/><polygon points="592.2,265.1 594.6,262.3 598.9,261.9 602.0,260.0 603.6,257.6 606.0,255.2 609.1,253.3 612.3,252.5 615.4,252.9 620.2,253.7 621.7,254.9 616.2,256.0 611.5,255.2 609.1,256.8 606.8,260.0 605.2,263.1 604.4,267.1 602.8,270.2 599.7,271.8 595.7,271.8 593.4,269.4" fill="#ffd700"/><polygon points="606.0,256.0 611.5,255.2 615.4,255.2 617.0,256.8 616.2,260.0 613.1,262.3 613.1,265.5 615.4,268.6 613.9,272.6 612.3,276.5 609.9,277.3 607.6,275.7 605.2,271.0 604.4,267.1 605.2,263.1 606.8,260.0" fill="#f0e68c"/><polygon points="616.2,254.1 620.2,254.5 624.1,257.6 628.0,260.8 632.0,263.1 632.8,265.5 628.0,267.9 621.7,268.2 619.4,266.3 617.0,263.1 616.2,260.0 617.0,256.8" fill="#ffa500"/><polygon points="627.3,270.2 632.8,269.8 634.3,272.2 628.0,272.6" fill="#98fb98"/><polygon points="625.7,273.0 634.3,272.6 635.9,275.7 626.5,276.1" fill="#d2b48c"/><polygon points="625.7,276.4 633.6,276.1 634.3,279.7 627.3,280.1" fill="#ffd700"/><polygon points="615.4,280.5 626.5,279.7 634.3,280.5 635.9,286.0 634.3,290.7 626.5,289.9 620.2,289.1 616.2,286.8" fill="#ffa500"/><polygon points="598.9,282.0 606.8,281.2 615.4,281.2 616.2,286.8 615.4,292.3 613.9,295.4 606.0,296.2 599.7,293.9 598.1,287.6" fill="#d2b48c"/><polygon points="600.5,276.5 603.6,274.9 604.4,278.1 602.8,280.1 600.5,278.9" fill="#ffa500"/><polygon points="593.4,284.4 598.1,282.8 598.9,286.8 594.9,287.2" fill="#98fb98"/><polygon points="591.0,287.6 598.1,286.8 598.9,289.9 592.6,290.3" fill="#eee8aa"/><polygon points="572.9,271.0 575.2,270.2 578.0,272.6 576.8,276.1 579.6,278.9 581.9,282.0 585.1,284.4 586.3,286.8 583.1,288.7 576.8,289.1 569.7,289.5 566.6,289.1 571.3,286.8 572.9,284.4 573.7,282.0 571.7,279.7 570.9,276.5 572.1,274.2" fill="#ffa500"/><polygon points="560.3,282.0 563.4,280.1 568.2,279.7 569.7,281.2 569.3,284.4 566.6,286.4 561.8,286.0 559.9,284.4" fill="#d2b48c"/><polygon points="572.0,294.0 577.3,292.4 582.0,291.0 590.0,288.0 595.7,289.7 601.0,291.0 602.0,298.0 600.3,301.6 601.0,305.0 596.0,307.0 591.8,307.5 585.0,309.0 581.3,307.5 581.0,301.0 578.7,297.6 575.0,296.0" fill="#ffd700"/><polygon points="558.3,307.5 562.9,306.8 571.4,307.2 580.0,308.1 585.9,309.1 591.1,310.1 587.9,312.1 584.6,314.7 582.6,317.3 582.6,320.0 578.7,323.9 574.7,325.2 568.1,325.9 564.9,327.2 562.2,324.6 561.6,320.0 563.5,314.7 562.2,310.8 558.9,310.1" fill="#eee8aa"/><polygon points="558.9,310.1 563.5,311.4 562.9,316.7 561.6,320.0 562.2,324.6 557.6,325.2 557.0,320.0 558.0,314.7" fill="#fa8072"/><polygon points="570.6,331.3 577.6,329.6 593.3,326.1 607.3,325.2 615.1,325.2 616.9,334.0 615.1,339.2 628.2,339.2 642.2,344.4 649.1,338.3 659.6,338.3 677.1,342.7 687.5,344.4 694.5,361.9 697.3,372.6 705.2,383.6 709.2,386.8 716.3,396.2 722.6,404.1 726.5,407.3 730.5,410.4 743.1,412.0 745.9,409.6 743.9,421.5 739.9,430.9 733.6,438.8 725.7,446.7 722.0,457.8 717.7,468.4 718.8,493.6 717.7,504.1 709.3,518.8 694.6,533.5 686.2,546.2 679.9,554.6 669.4,563.0 652.6,571.4 640.0,573.5 636.8,556.7 633.6,554.6 631.5,537.7 629.4,525.1 625.2,516.7 627.3,502.0 631.5,491.5 631.5,481.0 628.4,474.7 625.2,470.5 618.9,462.1 615.8,453.6 616.8,443.1 612.6,438.9 604.2,435.8 600.0,432.6 596.8,431.7 586.3,433.4 574.1,435.2 554.9,436.1 547.9,431.7 540.9,423.0 537.5,419.5 532.2,414.2 525.2,412.5 522.6,402.0 525.2,389.8 524.9,381.1 526.1,375.8 530.5,367.1 537.5,360.1 544.4,354.9 551.4,349.7 553.2,342.7 560.1,337.5" fill="#f0e68c"/><polygon points="616.8,399.0 637.8,399.0 639.9,428.4 637.8,434.7 642.1,441.0 631.5,443.1 616.8,443.1 614.7,438.9 612.6,432.6 617.9,428.4" fill="#f0e68c"/><polygon points="637.8,399.0 677.8,399.0 682.0,432.6 663.1,434.7 648.4,441.0 642.1,441.0 637.8,434.7 639.9,428.4" fill="#ffa500"/><polygon points="669.4,399.0 705.1,399.0 703.0,432.6 692.5,438.9 682.0,434.7" fill="#d2b48c"/><polygon points="698.8,420.0 738.8,420.0 734.6,428.4 726.2,438.9 715.6,438.9 705.1,434.7" fill="#f0e68c"/><polygon points="734.6,426.3 741.9,426.3 740.9,432.6 730.4,447.3 722.0,457.8 717.7,445.2 726.2,438.9" fill="#fa8072"/><polygon points="648.4,441.0 663.1,434.7 682.0,432.6 692.5,438.9 690.4,456.8 687.3,466.3 690.4,483.1 684.1,485.2 682.0,499.9 669.4,493.6 661.0,481.0 654.7,478.9 644.2,476.8 631.5,476.8 628.4,474.7 635.7,470.5 642.1,462.1 648.4,451.5" fill="#f0e68c"/><polygon points="616.8,443.1 629.4,445.2 635.7,453.6 631.5,462.1 625.2,470.5 618.9,462.1 615.8,453.6" fill="#ffd700"/><polygon points="617.9,445.2 623.1,445.2 623.1,449.4 617.9,449.4" fill="#98fb98"/><polygon points="629.4,445.2 633.6,441.0 648.4,441.0 648.4,451.5 642.1,462.1 635.7,470.5 627.3,472.6 625.2,468.4 631.5,462.1 635.7,453.6" fill="#fa8072"/><polygon points="705.1,434.7 717.7,438.9 722.0,457.8 717.7,468.4 705.1,459.9 700.9,449.4" fill="#98fb98"/><polygon points="692.5,438.9 705.1,438.9 703.0,453.6 690.4,456.8 690.4,447.3" fill="#ffd700"/><polygon points="687.3,457.8 692.5,457.8 692.5,466.3 687.3,466.3" fill="#98fb98"/><polygon points="690.4,457.8 703.0,454.7 717.7,468.4 718.8,493.6 705.1,495.7 694.6,487.3 690.4,481.0 687.3,466.3" fill="#ffa500"/><polygon points="629.4,474.7 644.2,475.7 654.7,479.9 661.0,481.0 663.1,495.7 667.3,495.7 661.0,508.3 663.1,518.8 625.2,516.7 627.3,502.0 631.5,491.5 631.5,481.0" fill="#98fb98"/><polygon points="663.1,495.7 669.4,494.6 684.1,485.2 694.6,487.3 696.7,497.8 692.5,506.2 684.1,512.5 671.5,518.8 661.0,514.6 661.0,508.3" fill="#eee8aa"/><polygon points="694.6,487.3 705.1,495.7 718.8,493.6 717.7,504.1 709.3,518.8 694.6,533.5 686.2,544.1 686.2,533.5 692.5,523.0 692.5,512.5 703.0,512.5 703.0,499.9" fill="#98fb98"/><polygon points="696.7,489.4 703.0,491.5 703.0,512.5 698.8,514.6 696.7,504.1" fill="#ffd700"/><polygon points="671.5,518.8 684.1,512.5 692.5,514.6 692.5,525.1 684.1,533.5 677.8,533.5 673.6,525.1" fill="#ffa500"/><polygon points="625.2,516.7 663.1,518.8 656.8,519.9 650.5,520.9 650.5,546.2 646.3,554.6 637.8,556.7 633.6,554.6 631.5,537.7 629.4,525.1" fill="#fa8072"/><polygon points="650.5,520.9 663.1,518.8 673.6,525.1 677.8,533.5 669.4,539.8 661.0,544.1 650.5,548.3" fill="#d2b48c"/><polygon points="636.8,556.7 646.3,554.6 650.5,548.3 661.0,544.1 669.4,539.8 677.8,533.5 684.1,533.5 686.2,546.2 679.9,554.6 669.4,563.0 652.6,571.4 639.9,573.5" fill="#ffd700"/><polygon points="667.3,558.8 672.5,555.6 674.6,559.8 669.4,563.0" fill="#ffd700"/><polygon points="681.0,546.2 684.1,547.2 683.1,550.4 681.0,549.3" fill="#ffa500"/><polygon points="717.7,544.1 719.8,533.5 724.1,520.9 730.4,508.3 738.8,499.9 741.9,502.0 739.8,512.5 734.6,529.3 728.3,539.8 722.0,546.2" fill="#d2b48c"/><polygon points="636.7,286.3 639.5,284.9 647.8,285.6 654.8,287.0 661.8,288.4 665.0,289.1 665.0,299.5 659.0,299.5 656.2,296.8 652.0,295.4 644.3,294.7 636.7,294.0 636.0,290.5" fill="#98fb98"/><polygon points="612.2,289.8 616.4,288.4 622.7,289.8 626.2,291.2 624.1,293.3 618.5,292.6 614.3,291.9" fill="#ffd700"/><polygon points="624.8,292.6 629.7,291.9 635.3,291.9 636.0,294.0 628.3,294.7" fill="#eee8aa"/><polygon points="614.3,294.7 617.8,294.0 624.1,294.0 623.7,297.5 619.2,298.2 615.7,297.5" fill="#fa8072"/><polygon points="624.1,296.1 628.3,294.7 633.9,294.7 636.7,296.8 635.3,299.5 628.3,300.2 624.8,298.8" fill="#ffa500"/><polygon points="599.7,297.5 603.2,296.8 605.9,297.5 605.2,299.5 601.1,299.9" fill="#ffa500"/><polygon points="618.5,298.8 622.7,298.2 622.0,300.9 619.2,300.9" fill="#ffd700"/><polygon points="622.0,300.9 628.3,300.2 631.1,301.6 627.6,302.3 624.1,303.0 625.5,306.5 622.7,303.7" fill="#eee8aa"/><polygon points="624.8,302.3 631.1,302.3 633.2,306.5 630.4,307.9 626.9,305.8" fill="#fa8072"/><polygon points="631.8,300.2 636.0,299.5 638.8,303.0 641.5,306.5 640.8,309.3 636.7,307.9 633.9,305.8" fill="#ffd700"/><polygon points="633.2,307.9 636.0,307.9 635.3,310.0 633.5,309.3" fill="#ffa500"/><polygon points="636.0,309.3 640.1,310.7 638.8,316.3 636.7,313.5" fill="#ffd700"/><polygon points="639.5,310.7 644.3,310.7 644.3,312.8 640.1,312.8" fill="#ffa500"/><polygon points="636.0,296.1 638.1,294.7 644.3,294.7 650.6,295.4 654.8,300.2 655.5,304.4 649.2,305.8 644.3,305.8 640.1,303.0" fill="#f0e68c"/><polygon points="642.9,305.8 649.9,305.8 655.5,305.1 654.8,310.7 649.2,312.1 645.0,311.4 643.6,309.3" fill="#d2b48c"/><polygon points="640.8,313.5 645.0,312.8 649.2,313.5 645.7,316.3 644.3,319.1 646.4,321.9 644.3,324.7 640.8,321.9 640.1,317.7" fill="#98fb98"/><polygon points="601.1,301.6 605.2,300.2 610.1,298.8 614.3,298.8 617.1,300.9 615.0,303.7 612.9,305.8 617.8,310.7 623.4,314.9 629.0,315.6 633.9,315.6 632.5,317.7 629.7,319.1 626.9,316.3 624.8,319.1 629.0,319.1 630.4,321.9 626.9,321.9 624.1,319.1 619.9,314.9 614.3,312.1 609.4,306.5 605.9,303.7 602.5,303.7" fill="#eee8aa"/><polygon points="606.6,309.3 609.4,309.3 609.1,311.4 607.3,311.4" fill="#ffd700"/><polygon points="606.6,312.8 609.4,313.5 610.1,318.4 607.3,319.1 606.3,315.6" fill="#eee8aa"/><polygon points="619.9,321.9 624.1,321.2 626.9,322.6 625.5,324.7 622.0,324.0" fill="#eee8aa"/><polygon points="579.3,328.7 593.3,326.1 607.3,325.2 609.0,337.5 615.1,339.2 615.1,354.9 617.7,365.4 623.0,369.7 596.8,383.7 595.0,382.8 561.9,363.6 554.9,354.9 560.1,347.9 572.4,342.7 579.3,337.5" fill="#ffa500"/><polygon points="570.6,331.3 577.6,329.6 580.2,330.5 579.3,337.5 572.4,342.7 560.1,347.9 554.9,354.9 549.7,357.5 540.9,361.0 534.0,368.9 526.1,375.8 530.5,367.1 537.5,360.1 544.4,354.9 551.4,349.7 553.2,342.7 560.1,337.5" fill="#98fb98"/><polygon points="526.1,375.8 534.0,368.9 540.9,361.0 554.9,356.6 553.2,360.1 542.7,363.6 537.5,372.4 533.1,375.8" fill="#fa8072"/><polygon points="526.1,375.8 533.1,375.8 537.5,372.4 540.9,365.4 554.9,360.1 561.9,362.8 561.9,395.9 540.9,396.8 536.6,398.5 532.2,395.0 525.2,389.8 524.9,381.1" fill="#ffd700"/><polygon points="607.3,326.1 615.1,325.2 616.9,334.0 615.1,340.9 609.9,339.2 608.1,332.2" fill="#ffd700"/><polygon points="615.1,339.2 628.2,339.2 642.2,344.4 649.1,338.3 659.6,338.3 663.1,344.4 666.6,380.2 659.6,379.3 635.2,370.6 623.0,369.7 617.7,365.4 615.1,354.9" fill="#98fb98"/><polygon points="661.4,342.7 677.1,342.7 687.5,344.4 694.5,361.9 699.8,372.4 666.6,372.4 663.1,344.4" fill="#ffa500"/><polygon points="540.9,396.8 561.9,395.9 561.9,363.6 595.0,383.7 596.8,396.8 586.3,398.5 581.1,400.3 575.8,399.4 567.1,405.5 563.6,414.2 554.0,416.0 550.5,410.8 540.9,407.3" fill="#eee8aa"/><polygon points="523.5,393.3 532.2,395.0 539.2,402.0 540.9,407.3 530.5,406.4 525.2,407.3 522.6,402.0" fill="#ffa500"/><polygon points="524.4,407.3 534.0,407.3 532.2,412.5 525.2,412.5" fill="#d2b48c"/><polygon points="527.0,409.0 540.9,407.3 549.7,410.8 553.2,424.7 546.2,421.2 542.7,424.7 537.5,419.5 532.2,414.2" fill="#98fb98"/><polygon points="535.7,417.7 542.7,419.5 543.6,424.7 537.5,424.7" fill="#f0e68c"/><polygon points="540.9,423.0 547.9,424.7 553.2,428.2 554.9,435.2 547.9,431.7" fill="#ffd700"/><polygon points="553.2,417.7 563.6,415.1 571.5,415.1 572.4,435.2 554.9,436.1 554.0,424.7" fill="#ffa500"/><polygon points="565.4,407.3 575.8,400.3 584.6,399.4 589.8,407.3 582.8,412.5 572.4,412.5 565.4,416.0" fill="#fa8072"/><polygon points="572.4,412.5 582.8,412.5 585.4,419.5 586.3,433.4 574.1,435.2 571.5,424.7" fill="#98fb98"/><polygon points="584.6,413.4 589.8,410.8 588.9,433.4 586.3,433.4" fill="#ffd700"/><polygon points="589.8,410.8 595.0,409.0 596.8,417.7 595.0,431.7 588.9,433.4" fill="#98fb98"/><polygon points="596.8,383.7 623.0,369.7 634.3,372.4 636.9,377.6 632.6,402.9 626.5,405.5 614.2,405.5 603.8,402.0 595.0,403.8 586.3,400.3 593.3,396.8" fill="#d2b48c"/><polygon points="595.0,404.6 605.5,402.0 617.7,405.5 631.7,404.6 635.2,410.8 628.2,417.7 624.7,424.7 617.7,431.7 607.3,435.2 596.8,431.7 595.0,421.2" fill="#ffd700"/><polygon points="634.3,370.6 659.6,379.3 666.6,380.2 665.7,395.0 661.4,405.5 664.9,414.2 656.1,419.5 645.7,424.7 636.9,423.0 633.4,410.8 635.2,405.5 632.6,393.3 636.9,377.6" fill="#fa8072"/><polygon points="666.6,372.4 699.8,372.4 705.0,382.8 708.5,393.3 706.7,398.5 701.5,402.0 699.8,410.8 692.8,410.8 684.0,417.7 671.8,420.3 666.6,417.7 661.4,405.5 665.7,395.0 666.6,380.2" fill="#ffd700"/><polygon points="736.8,326.8 751.0,326.8 751.0,345.8 746.2,347.3" fill="#d2b48c"/><polygon points="746.2,347.3 751.0,344.2 758.8,348.9 760.4,361.5 765.9,367.1 757.3,363.9 752.5,360.0 749.4,350.5" fill="#98fb98"/><polygon points="751.7,326.8 762.0,342.6 768.3,352.1 776.2,363.1 782.5,377.3 787.2,393.1 790.4,408.8 793.5,424.6 788.8,421.5 780.9,404.1 774.6,388.3 771.5,377.3 765.9,367.8 760.4,361.5 758.8,348.9" fill="#ffd700"/><polygon points="680.0,416.7 695.8,410.4 700.5,415.1 698.9,423.0 703.7,432.5 694.2,438.8 680.0,434.1" fill="#d2b48c"/><polygon points="703.7,388.3 709.2,386.8 716.3,396.2 722.6,404.1 719.4,405.7 711.5,399.4 705.2,396.2" fill="#98fb98"/><polygon points="700.5,402.5 705.2,396.2 711.5,399.4 719.4,405.7 724.9,412.0 730.5,418.3 739.9,423.0 738.3,427.8 732.0,434.1 721.0,440.4 711.5,437.2 703.7,432.5 698.9,423.0" fill="#f0e68c"/><polygon points="721.8,404.1 726.5,407.3 724.9,412.0 721.3,410.4" fill="#98fb98"/><polygon points="725.7,412.0 743.1,412.0 742.3,418.3 739.9,423.0 730.5,418.3" fill="#ffa500"/><polygon points="743.9,410.4 745.9,409.6 743.9,421.5 739.9,430.9 733.6,438.8 725.7,446.7 722.6,450.0 719.4,450.0 721.0,440.4 732.0,434.1 738.3,427.8 742.3,419.9" fill="#fa8072"/><polygon points="691.0,341.0 695.8,339.5 703.7,344.2 714.7,348.9 721.0,347.3 728.9,358.4 734.4,363.1 738.3,369.4 743.1,374.2 744.6,380.5 741.5,385.2 732.0,385.2 724.2,389.9 719.4,388.3 711.5,378.9 706.8,367.8 698.9,356.8 692.6,348.9" fill="#d2b48c"/><polygon points="722.6,389.9 732.0,385.2 743.1,383.6 746.2,393.1 739.9,397.8 727.3,404.1 724.9,401.0" fill="#ffd700"/><polygon points="743.1,366.3 749.4,369.4 754.1,378.9 751.0,388.3 746.2,393.1 743.1,383.6 744.6,377.3" fill="#f0e68c"/><polygon points="738.3,366.3 743.1,363.1 744.6,369.4 741.5,371.3" fill="#fa8072"/><polygon points="721.0,347.3 727.3,348.9 735.2,353.7 743.1,360.7 739.9,363.9 734.4,363.1 728.9,358.4" fill="url(#oc)"/><polygon points="671.0,420.0 678.8,414.7 692.0,413.4 695.9,409.5 699.9,414.7 698.6,422.6 703.8,433.1 701.2,439.0 690.7,439.7 685.4,434.4 680.2,434.4 673.6,425.2" fill="#d2b48c"/><polygon points="383.0,452.0 388.5,448.9 391.7,441.0 398.0,442.6 401.1,447.3 405.8,444.9 415.3,441.0 418.5,438.6 420.0,447.3 416.1,456.8 421.6,455.2 427.9,455.2 434.2,463.1 445.3,463.1 456.3,472.5 462.6,475.7 462.6,485.1 456.3,494.6 453.1,500.9 452.0,527.3 454.1,535.7 443.6,540.0 439.4,546.3 441.5,554.7 439.4,567.3 433.1,563.1 426.8,552.6 424.7,540.0 420.5,529.4 412.1,523.1 410.0,516.8 399.4,500.0 399.5,497.8 393.2,489.9 388.5,494.6 380.6,483.6 382.2,463.1" fill="#98fb98"/><polygon points="377.5,415.8 383.8,409.5 388.5,407.9 383.0,415.8 382.2,428.4 386.9,437.8 386.9,448.9 383.8,453.6 382.2,463.1 377.5,459.9 375.1,452.0 374.3,439.4 375.9,425.2" fill="#fa8072"/><polygon points="382.2,412.6 388.5,407.9 394.8,414.2 399.5,417.3 400.3,422.1 398.0,430.0 394.8,436.3 391.7,441.0 388.5,448.9 386.9,437.8 383.0,428.4 382.2,418.9" fill="#ffd700"/><polygon points="398.0,425.2 402.7,423.7 404.3,430.0 404.3,442.6 401.1,447.3 398.0,444.2 398.7,434.7" fill="#d2b48c"/><polygon points="403.5,431.5 410.6,432.3 410.6,444.2 404.3,444.9" fill="#eee8aa"/><polygon points="410.3,433.1 414.5,433.9 415.3,441.0 410.6,444.2" fill="#ffd700"/><polygon points="372.7,453.6 377.5,452.0 377.5,461.5 374.3,463.1" fill="#d2b48c"/><polygon points="374.3,463.1 382.2,463.1 380.6,483.6 388.5,494.6 391.7,500.9 393.2,526.1 388.5,516.7 382.2,504.1 377.5,488.3" fill="#eee8aa"/><polygon points="415.3,322.5 419.1,317.8 423.0,313.1 427.1,308.6 431.3,304.3 435.6,300.0 440.1,295.9 444.6,291.8 449.3,288.0 454.0,284.2 458.9,280.6 463.9,277.2 469.0,273.8 474.1,270.6 479.4,267.6 484.7,264.7 490.2,262.0 495.7,259.5 501.2,257.0 506.9,254.8 512.5,252.7 518.3,250.8 524.1,249.0 530.0,247.4 535.9,246.0 541.8,244.7 547.8,243.6 553.8,242.7 559.8,242.0 565.8,241.4 571.9,241.0 571.9,242.6 565.9,243.0 559.9,243.6 554.0,244.3 548.0,245.2 542.1,246.3 536.2,247.5 530.4,249.0 524.5,250.5 518.8,252.3 513.1,254.2 507.4,256.3 501.8,258.5 496.3,260.9 490.9,263.5 485.5,266.2 480.2,269.0 475.0,272.0 469.8,275.2 464.8,278.5 459.9,281.9 455.0,285.5 450.3,289.2 445.6,293.1 441.1,297.0 436.7,301.1 432.4,305.4 428.3,309.7 424.3,314.2 420.3,318.8 416.6,323.5" fill="#3c5064"/><polygon points="434.8,305.3 437.8,302.3 440.9,299.4 444.1,296.5 447.3,293.7 450.6,291.0 454.0,288.3 457.3,285.7 460.8,283.2 464.3,280.8 467.8,278.4 471.4,276.1 475.0,273.8 478.7,271.7 482.5,269.6 486.2,267.6 490.0,265.7 493.9,263.8 497.7,262.0 501.7,260.3 505.6,258.7 509.6,257.2 513.6,255.7 517.7,254.3 521.7,253.1 525.8,251.9 529.9,250.7 534.1,249.7 538.2,248.7 542.4,247.9 546.6,247.1 546.8,248.3 542.6,249.0 538.5,249.9 534.3,250.9 530.2,251.9 526.1,253.0 522.1,254.2 518.0,255.5 514.0,256.9 510.0,258.3 506.1,259.8 502.1,261.4 498.2,263.1 494.4,264.9 490.6,266.7 486.8,268.6 483.0,270.6 479.3,272.7 475.7,274.9 472.1,277.1 468.5,279.4 465.0,281.8 461.5,284.2 458.1,286.7 454.7,289.3 451.4,291.9 448.1,294.6 444.9,297.4 441.8,300.3 438.7,303.2 435.6,306.1" fill="#3c5064"/><polygon points="453.1,287.2 454.1,286.5 455.0,285.7 456.0,285.0 457.0,284.3 458.0,283.5 459.0,282.8 460.0,282.1 461.0,281.4 462.0,280.7 463.0,280.0 464.0,279.3 465.0,278.6 466.0,277.9 467.1,277.2 468.1,276.5 469.1,275.9 470.1,275.2 471.2,274.6 472.2,273.9 473.3,273.3 474.3,272.6 475.4,272.0 476.4,271.4 477.5,270.8 478.6,270.2 479.6,269.6 480.7,269.0 481.8,268.4 482.9,267.8 483.9,267.2 484.5,268.3 483.4,268.8 482.4,269.4 481.3,270.0 480.2,270.6 479.2,271.2 478.1,271.8 477.0,272.4 476.0,273.0 474.9,273.7 473.9,274.3 472.9,274.9 471.8,275.6 470.8,276.2 469.8,276.9 468.7,277.5 467.7,278.2 466.7,278.9 465.7,279.6 464.7,280.3 463.7,280.9 462.7,281.6 461.7,282.3 460.7,283.1 459.7,283.8 458.7,284.5 457.7,285.2 456.7,285.9 455.8,286.7 454.8,287.4 453.8,288.2" fill="#eee8aa"/><polygon points="510.8,255.2 511.5,255.0 512.2,254.7 512.9,254.5 513.6,254.2 514.3,254.0 515.0,253.8 515.7,253.5 516.4,253.3 517.1,253.1 517.8,252.8 518.5,252.6 519.2,252.4 519.9,252.2 520.6,251.9 521.3,251.7 522.0,251.5 522.7,251.3 523.4,251.1 524.1,250.9 524.8,250.7 525.5,250.5 526.3,250.3 527.0,250.1 527.7,249.9 528.4,249.7 529.1,249.5 529.8,249.3 530.5,249.1 531.2,248.9 532.0,248.8 532.2,249.9 531.5,250.1 530.8,250.3 530.1,250.5 529.4,250.7 528.7,250.8 528.0,251.0 527.3,251.2 526.6,251.4 525.9,251.6 525.2,251.8 524.5,252.0 523.8,252.2 523.1,252.4 522.4,252.7 521.7,252.9 521.0,253.1 520.3,253.3 519.6,253.5 518.9,253.7 518.2,254.0 517.5,254.2 516.8,254.4 516.1,254.7 515.4,254.9 514.7,255.1 514.0,255.4 513.3,255.6 512.6,255.9 511.9,256.1 511.2,256.4" fill="#eee8aa"/><polygon points="373.4,462.0 380.8,461.0 381.8,468.4 380.8,483.1 388.1,489.4 389.2,504.1 390.2,518.8 394.0,524.0 390.0,526.0 384.0,518.8 379.7,499.9 375.5,483.1 372.0,470.0" fill="#eee8aa"/><polygon points="388.1,489.4 393.2,489.9 396.5,492.5 407.0,508.3 411.3,518.8 412.3,525.1 407.0,525.1 405.0,533.5 400.7,533.5 396.5,525.1 390.2,518.8 389.2,504.1" fill="#fa8072"/><polygon points="407.0,525.1 412.3,524.1 419.7,537.7 427.0,546.2 426.0,551.4 420.7,549.3 413.4,537.7 408.1,531.4" fill="#d2b48c"/><polygon points="396.8,533.1 403.2,532.9 411.0,533.7 423.7,549.5 428.4,547.9 429.2,560.5 431.5,565.2 437.9,574.7 439.4,577.9 441.8,582.6 437.9,587.3 436.3,592.1 441.0,592.1 439.4,596.8 444.2,603.1 450.5,609.4 455.2,617.3 452.1,618.1 447.3,617.3 439.4,609.4 431.5,599.9 423.7,588.9 415.8,576.3 409.5,565.2 403.2,552.6 396.8,540.0" fill="#eee8aa"/><polygon points="393.7,524.2 396.1,524.2 399.2,540.0 405.5,553.4 411.8,566.0 418.1,576.6 425.2,588.1 433.1,599.1 441.0,608.6 449.7,617.6 447.3,617.3 439.4,609.4 431.5,599.9 423.7,588.9 415.8,576.3 409.5,565.2 403.2,552.6 396.8,540.0" fill="#ffa500"/><polygon points="428.4,560.5 436.3,566.8 440.2,571.5 439.4,575.0 434.7,573.1 430.8,568.4" fill="#ffd700"/><polygon points="452.1,618.1 463.1,623.6 472.6,628.3 469.4,629.3 459.9,625.5 453.6,620.8" fill="#3c5064"/><polygon points="466.2,619.7 471.8,620.4 471.0,622.0 467.0,621.7" fill="#3c5064"/><polygon points="507.2,266.1 511.2,262.2 521.6,257.6 532.1,251.1 541.3,245.9 554.3,242.6 570.1,241.9 566.1,245.9 559.6,249.8 551.7,253.7 543.9,256.3 534.7,258.9 524.2,262.9 515.1,266.1 509.8,268.8" fill="#fdf5e6"/><polygon points="546.5,260.3 551.7,258.9 560.9,258.9 561.5,260.9 554.3,262.2 547.1,262.2" fill="#f0e68c"/><polygon points="430.0,306.1 440.5,296.9 450.9,287.7 462.7,279.9 473.2,273.3 483.7,266.8 485.0,269.4 479.7,276.0 474.5,283.8 469.3,287.7 461.4,291.7 453.6,295.6 444.4,300.8 436.5,306.1" fill="#eee8aa"/><polygon points="399.5,345.2 405.8,334.2 415.3,321.5 424.8,312.1 434.2,305.8 443.7,299.5 446.8,296.3 445.3,301.0 437.4,307.3 427.9,315.2 418.5,324.7 409.0,335.7 401.9,343.6" fill="#ffd700"/><polygon points="398.7,346.0 394.8,356.2 390.1,368.8 385.3,381.5 380.6,394.1 375.9,410.0 377.5,410.0 383.0,394.1 387.7,381.5 392.4,368.8 396.4,357.8 400.3,346.8" fill="#3c5064"/><polygon points="391.7,382.2 394.8,383.0 394.0,386.2 391.3,385.4" fill="#98fb98"/><polygon points="497.6,641.9 520.0,652.0 540.0,659.0 558.0,663.5 557.0,665.0 538.0,661.0 518.0,654.0 496.5,643.5" fill="#3c5064"/><polygon points="524.0,652.0 530.0,654.5 528.0,655.5 522.0,653.5" fill="#fdf5e6"/><polygon points="557.9,662.0 565.3,658.3 571.2,655.3 581.6,654.5 603.9,654.5 626.1,652.3 648.4,649.4 654.3,648.6 655.8,650.8 641.0,656.8 618.7,662.0 596.4,665.7 566.8,666.4 559.3,664.9" fill="#fdf5e6"/><polygon points="586.0,243.5 600.0,243.2 615.0,245.0 630.0,247.5 645.0,251.0 660.0,255.5 660.0,256.8 645.0,252.4 630.0,249.0 615.0,246.4 600.0,244.6 586.0,245.0" fill="#3c5064"/><polygon points="627.0,249.0 636.0,252.0 642.0,257.0 644.0,262.0 643.0,262.5 640.0,258.0 634.0,253.5 626.0,250.5" fill="#3c5064"/><polygon points="596.0,243.5 603.0,242.8 604.0,245.0 597.0,245.5" fill="#3c5064"/><polygon points="499.0,320.2 500.8,319.6 502.0,320.8 500.2,321.4" fill="#3c5064"/><polygon points="507.2,321.2 510.2,320.6 510.8,321.8 507.8,322.4" fill="#3c5064"/><polygon points="526.7,350.4 528.5,349.8 529.1,351.6 526.7,352.2" fill="#3c5064"/><polygon points="534.3,351.4 537.9,350.8 537.9,352.6 534.9,353.2" fill="#3c5064"/><polygon points="496.8,392.4 498.6,391.8 499.2,393.6 497.4,394.2" fill="#3c5064"/><polygon points="500.6,396.3 502.4,395.7 502.4,397.5 500.6,397.5" fill="#3c5064"/><polygon points="612.5,437.4 613.7,436.8 614.3,438.6 612.5,439.2" fill="#3c5064"/><polygon points="727.5,488.4 728.7,487.8 729.3,489.6 727.5,490.2" fill="#3c5064"/><polygon points="752.8,512.6 754.6,512.0 755.2,514.4 753.4,515.0" fill="#3c5064"/><polygon points="393.2,395.1 395.6,393.3 396.8,395.7 394.4,396.9" fill="#3c5064"/><polygon points="387.0,404.3 389.4,403.1 390.0,405.5 387.6,406.1" fill="#3c5064"/><polygon points="401.0,418.5 403.4,417.9 404.0,420.3 401.6,420.3" fill="#3c5064"/><polygon points="694.2,299.4 699.4,299.4 702.1,303.4 706.0,309.9 712.6,312.6 716.5,317.8 717.8,324.4 713.9,325.7 708.6,317.8 699.4,312.6 695.5,306.0" fill="url(#oc)"/><polygon points="653.4,299.4 667.9,302.1 675.8,304.7 683.7,307.3 686.3,312.6 675.8,311.3 667.9,312.6 653.4,312.6" fill="url(#oc)"/><polygon points="612.3,276.5 615.4,268.6 613.5,265.1 616.6,260.0 620.2,267.5 624.9,269.4 625.7,276.5 620.2,279.7 615.4,280.5" fill="url(#oc)"/></g><circle cx="583" cy="453.5" r="212.5" fill="none" stroke="#3c5064" stroke-width="1"/></svg>

<!-- page tabs -->
<div class="a" style="left:217px;top:669px;width:44px;height:24px;background:linear-gradient(#d6eafb,#c4e0f8);border:1px solid #4a95e0"></div>
<div class="t" style="left:221px;top:675px">Page-1</div>
<div class="a" style="left:265px;top:669px;width:21px;height:24px;background:linear-gradient(#ececec,#dedede);border:1px solid #b4b4b4"></div>
<div class="t" style="left:269px;top:675px">All</div>
<div class="a" style="left:286px;top:669px;width:44px;height:24px;background:linear-gradient(#ececec,#dedede);border:1px solid #b4b4b4"></div>
<svg class="a" style="left:291px;top:672px" width="14" height="18" viewBox="0 0 14 18"><path d="M1.5 1.5 H8.5 L12.5 5.5 V16.5 H1.5Z" fill="#fff" stroke="#333" stroke-width="1"/><path d="M8.5 1.5 V5.5 H12.5" fill="none" stroke="#333" stroke-width="1"/></svg>
<div class="t" style="left:306px;top:675px">Add</div>
<!-- navigator bar -->
<div class="a" style="left:216px;top:697px;width:717px;height:29px;border-radius:4px;background:linear-gradient(#fdfdfd,#f4f4f4 50%,#e9e9e9)"></div>
<div class="t" style="left:225px;top:705px">PAGE 1 OF 1</div>
<div class="a" style="left:299px;top:699px;width:1px;height:24px;background:#c8c8c8"></div>
<div class="a" style="left:314px;top:699px;width:1px;height:24px;background:#c8c8c8"></div>
<div class="t" style="left:673px;top:705px">10%</div>
<svg class="a" style="left:709px;top:703px" width="16" height="16" viewBox="0 0 16 16"><circle cx="7.5" cy="7.5" r="6.3" fill="#fff" stroke="#3c3c3c" stroke-width="1.1"/><path d="M4.3 7.5H10.7" stroke="#2a6a9a" stroke-width="1"/></svg>
<svg class="a" style="left:909px;top:703px" width="16" height="16" viewBox="0 0 16 16"><circle cx="7.5" cy="7.5" r="6.3" fill="#fff" stroke="#3c3c3c" stroke-width="1.1"/><path d="M4.3 7.5H10.7M7.5 4.3V10.7" stroke="#2a6a9a" stroke-width="1"/></svg>
<div class="a" style="left:731px;top:707px;width:168px;height:4px;background:#e2e2e2;border:1px solid #cfcfcf;border-radius:1px"></div>
<svg class="a" style="left:730px;top:698px" width="14" height="22" viewBox="0 0 14 22"><path d="M1.5 1.5 H11.5 V13.5 L6.5 19.5 L1.5 13.5Z" fill="#e8e8e8" stroke="#9a9a9a" stroke-width="1"/></svg>
<div class="a" style="left:736px;top:718px;width:1px;height:5px;background:#9a9a9a"></div>
<div class="a" style="left:817px;top:717px;width:1px;height:4px;background:#9a9a9a"></div>
<div class="a" style="left:898px;top:717px;width:1px;height:4px;background:#9a9a9a"></div>
<!-- clipped text under status -->
<div class="a" style="left:213px;top:733px;width:80px;height:2px;overflow:hidden"><div class="t" style="left:6px;top:-1px;color:#333">Label arcs:</div></div>


<!-- right panel -->
<div class="a" style="left:940px;top:93px;width:197px;height:637px;border:1px solid #dcdcdc;border-top:none;border-right:none"></div>
<div class="a" style="left:988px;top:93px;width:149px;height:1px;background:#dcdcdc"></div>
<div class="t" style="left:946px;top:87px">Controls</div>
<div class="a" style="left:944px;top:105px;width:190px;height:21px;background:linear-gradient(#f2f2f2,#e6e6e6);border:1px solid #acacac"></div>
<div class="t" style="left:948px;top:109px">Switch to Command Bars</div>
<div class="a" style="left:944px;top:137px;width:190px;height:73px;border:1px solid #dcdcdc;border-top:none"></div>
<div class="a" style="left:991px;top:137px;width:143px;height:1px;background:#dcdcdc"></div>
<div class="t" style="left:950px;top:131px">Settings</div>
<div class="t" style="left:978px;top:152px">Projection:</div>
<div class="t" style="left:975px;top:170px">Label arcs:</div>
<div class="t" style="left:948px;top:190px">Center meridian:</div>
<div class="a" style="left:1033px;top:170px;width:2px;height:13px;background:#7a7a7a"></div>
<div class="a" style="left:1033px;top:186px;width:2px;height:20px;background:#7a7a7a"></div>
<!-- combo -->
<div class="a" style="left:1033px;top:149px;width:98px;height:19px;background:#cce4f7;border:1px solid #3d8ee0"></div>
<div class="a" style="left:1113px;top:150px;width:1px;height:17px;background:#3d8ee0"></div>
<div class="t" style="left:1035px;top:153px">Orthographic</div>
<svg class="a" style="left:1117px;top:155px" width="10" height="8" viewBox="0 0 10 8"><path d="M1.2 1.5 L5 5.5 L8.8 1.5" fill="none" stroke="#111" stroke-width="2.2"/></svg>
<!-- list -->
<div class="a" style="left:1034px;top:168px;width:97px;height:300px;background:#fff;border:1px solid #9a9a9a;border-top:none;overflow:hidden">
 <div class="a" style="left:80px;top:0;width:16px;height:284px;background:#fff"></div>
 <div class="a" style="left:81px;top:18px;width:14px;height:192px;background:#cdcdcd"></div>
 <svg class="a" style="left:83px;top:5px" width="10" height="7" viewBox="0 0 10 7"><path d="M1.2 5.5 L5 1.8 L8.8 5.5" fill="none" stroke="#606060" stroke-width="2"/></svg>
 <svg class="a" style="left:83px;top:271px" width="10" height="7" viewBox="0 0 10 7"><path d="M1.2 1.5 L5 5.2 L8.8 1.5" fill="none" stroke="#606060" stroke-width="2"/></svg>
 <div class="a" style="left:0;top:266px;width:80px;height:17px;background:#cce8ff"></div>
 <div class="a" style="left:0;top:283px;width:96px;height:16px;background:#f0f0f0"></div>
 <div class="a" style="left:17px;top:285px;width:18px;height:12px;background:#cdcdcd"></div>
 <svg class="a" style="left:5px;top:287px" width="7" height="9" viewBox="0 0 7 9"><path d="M5.5 1 L1.8 4.5 L5.5 8" fill="none" stroke="#606060" stroke-width="2"/></svg>
 <svg class="a" style="left:68px;top:287px" width="7" height="9" viewBox="0 0 7 9"><path d="M1.5 1 L5.2 4.5 L1.5 8" fill="none" stroke="#606060" stroke-width="2"/></svg>
 <div class="a" style="left:0;top:0;width:80px;height:283px;overflow:hidden">
  <div class="t" style="left:2px;top:-4px">Aitoff</div>
<div class="t" style="left:2px;top:13px">Bonne</div>
<div class="t" style="left:2px;top:30px">Cylindrical Equal-Area</div>
<div class="t" style="left:2px;top:47px">Cylindrical Equal-Area</div>
<div class="t" style="left:2px;top:64px">Cylindrical Equal-Area</div>
<div class="t" style="left:2px;top:81px">Cylindrical Equal-Area</div>
<div class="t" style="left:2px;top:98px">Cylindrical Equal-Area</div>
<div class="t" style="left:2px;top:115px">Cylindrical Equal-Area</div>
<div class="t" style="left:2px;top:132px">Eckert IV</div>
<div class="t" style="left:2px;top:149px">Eckert VI</div>
<div class="t" style="left:2px;top:166px">Equirectangular</div>
<div class="t" style="left:2px;top:183px">Hammer</div>
<div class="t" style="left:2px;top:200px">Kavrayskiy VII</div>
<div class="t" style="left:2px;top:217px">Mercator</div>
<div class="t" style="left:2px;top:234px">Miller Cylindrical</div>
<div class="t" style="left:2px;top:251px">Mollweide</div>
<div class="t" style="left:2px;top:268px">Orthographic</div>
 </div>
</div>



<!-- status bar -->
<div class="a" style="left:8px;top:734px;width:1130px;height:19px;background:linear-gradient(#fafafa,#f0f0f0)"></div>
<div class="t" style="left:11px;top:737px">Example created in: 0.2399832 seconds,&nbsp; evaluated in: 0.1599888 seconds</div>

</body></html>
